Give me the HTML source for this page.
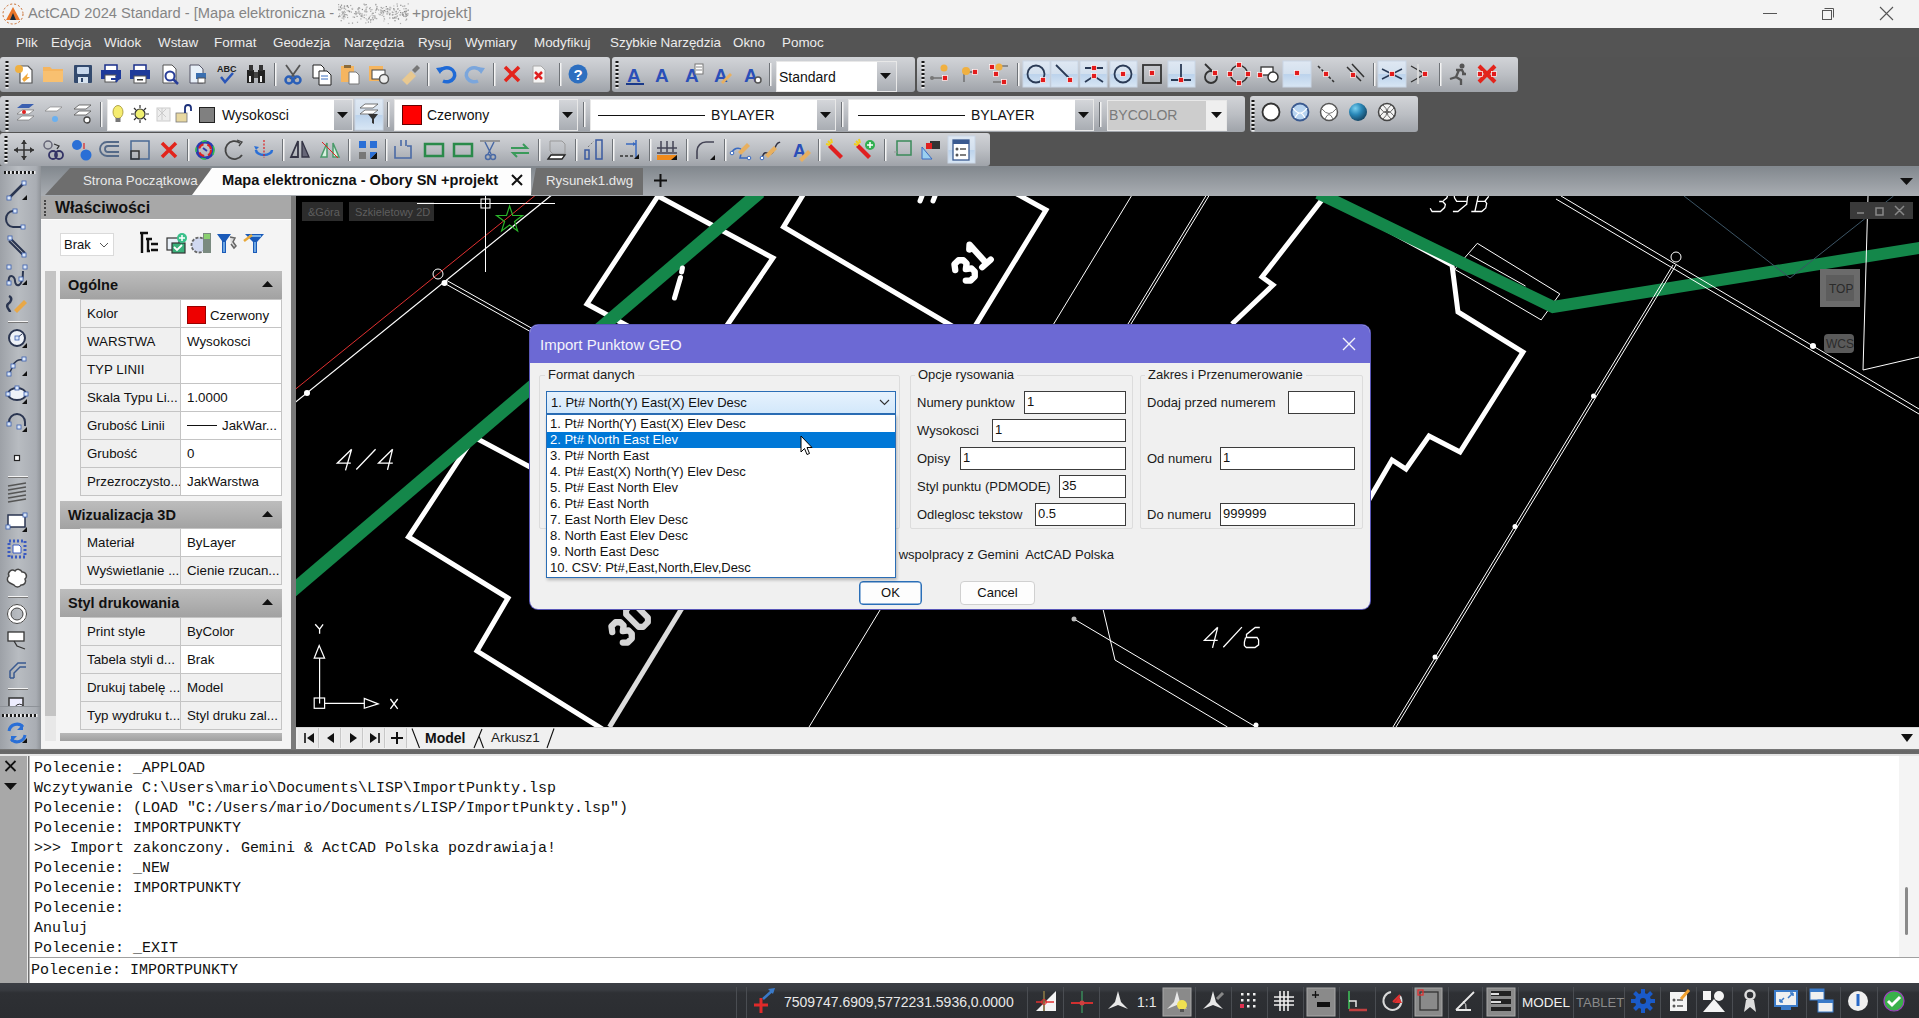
<!DOCTYPE html>
<html><head><meta charset="utf-8">
<style>
*{box-sizing:border-box;margin:0;padding:0}
html,body{width:1919px;height:1018px;overflow:hidden;background:#535353;font-family:"Liberation Sans",sans-serif;position:relative}
.a{position:absolute}
#title{left:0;top:0;width:1919px;height:28px;background:#f3f3f3}
#title .t{left:28px;top:5px;font-size:14.7px;color:#858585;white-space:nowrap}
#menu{left:0;top:28px;width:1919px;height:29px;background:#545454}
#menu span{position:absolute;top:6.5px;font-size:13.4px;color:#ececec;white-space:nowrap}
.tb{background:linear-gradient(#d2d4d8,#bcbfc4 50%,#9fa3a9);border-radius:3px}
#tabbar{left:40px;top:166px;width:1879px;height:30px;background:linear-gradient(#83898f 5%,#a9adb2)}
#lefttb{left:0;top:166px;width:41px;height:585px;background:linear-gradient(90deg,#9da1a7,#b8bcc1 45%,#a9adb3 88%,#8f9398)}
#props{left:41px;top:196px;width:251px;height:555px;background:#f0f0f0}
#draw{left:296px;top:196px;width:1623px;height:531px;background:#000;overflow:hidden}
#layout{left:296px;top:727px;width:1623px;height:23px;background:#f0f0f0}
#cmd{left:0;top:756px;width:1919px;height:227px;background:#a9a9a9}
#status{left:0;top:983px;width:1919px;height:35px;background:#2b2d31}
.lb{position:absolute;font-size:13px;color:#1a1a1a;white-space:nowrap}
.in{position:absolute;height:23px;border:1px solid #3c3c3c;background:#fff;font-size:13px;padding:1px 0 0 2px;color:#111;line-height:17px}
.btn{background:#fdfdfd;border:1px solid #d0d0d0;border-radius:4px;font-size:13px;color:#111;text-align:center;line-height:22px}
.li{position:absolute;left:0;width:348px;height:16px;font-size:13px;line-height:16px;padding-left:3px;color:#111;white-space:nowrap}
#props{overflow:hidden}
.ph{position:absolute;left:19px;width:222px;height:28px;background:linear-gradient(#bdbdbd,#a2a2a2);font-size:14.5px;font-weight:bold;color:#111;padding:6px 0 0 8px;white-space:nowrap}
.pr{position:absolute;left:39px;width:202px;height:28px;font-size:13.3px;color:#111;white-space:nowrap}
.pn{position:absolute;left:0;top:0;width:101px;height:29px;background:#f0f0f0;border:1px solid #c4c4c4;padding:6px 0 0 6px;overflow:hidden}
.pv{position:absolute;left:100px;top:0;width:102px;height:29px;border:1px solid #c4c4c4;padding:6px 0 0 6px;overflow:hidden}
.nb{position:absolute;top:1px;width:21px;height:20px;background:#ebebeb;border-right:1px solid #c8c8c8}
.cl{position:absolute;left:34px;font-family:"Liberation Mono",monospace;font-size:15px;color:#111;white-space:pre;line-height:20px}
.cb{position:absolute;background:#fff;border:1px solid #e8e8e8}
.cbb{position:absolute;background:linear-gradient(#d4d6da,#a9adb3);}
.cbt{position:absolute;font-size:14px;color:#111;white-space:nowrap}
</style></head><body>
<div id="title" class="a"><svg class="a" style="left:1px;top:2px" width="24" height="24"><circle cx="12" cy="12" r="10" fill="none" stroke="#c86a2a" stroke-width="1" stroke-dasharray="2,2"/><path d="M5,18 L12,5 L19,18 Z" fill="#e8752a"/><path d="M9,18 L12,11 L15,18 Z" fill="#1a2a3a"/></svg><div class="a t">ActCAD 2024 Standard - [Mapa elektroniczna -</div><svg class="a" style="left:338px;top:2px" width="72" height="24"><rect x="22.7" y="13.8" width="1.2" height="1.2" fill="#9a9a9a"/><rect x="57.5" y="15.3" width="1.2" height="1.2" fill="#9a9a9a"/><rect x="25.6" y="15.0" width="1.2" height="1.2" fill="#9a9a9a"/><rect x="6.0" y="11.9" width="1.2" height="1.2" fill="#888"/><rect x="4.9" y="14.0" width="1.2" height="1.2" fill="#a8a8a8"/><rect x="8.7" y="12.6" width="1.2" height="1.2" fill="#b0b0b0"/><rect x="44.1" y="8.6" width="1.2" height="1.2" fill="#a8a8a8"/><rect x="27.8" y="9.2" width="1.2" height="1.2" fill="#b0b0b0"/><rect x="3.3" y="12.3" width="1.2" height="1.2" fill="#b0b0b0"/><rect x="37.8" y="7.1" width="1.2" height="1.2" fill="#a8a8a8"/><rect x="21.6" y="11.1" width="1.2" height="1.2" fill="#a8a8a8"/><rect x="40.0" y="7.4" width="1.2" height="1.2" fill="#b0b0b0"/><rect x="26.1" y="8.5" width="1.2" height="1.2" fill="#9a9a9a"/><rect x="43.3" y="9.5" width="1.2" height="1.2" fill="#888"/><rect x="47.6" y="6.5" width="1.2" height="1.2" fill="#a8a8a8"/><rect x="64.6" y="11.7" width="1.2" height="1.2" fill="#c4c4c4"/><rect x="21.0" y="11.9" width="1.2" height="1.2" fill="#b0b0b0"/><rect x="5.7" y="3.3" width="1.2" height="1.2" fill="#c4c4c4"/><rect x="36.8" y="15.1" width="1.2" height="1.2" fill="#c4c4c4"/><rect x="42.6" y="4.9" width="1.2" height="1.2" fill="#9a9a9a"/><rect x="8.3" y="3.4" width="1.2" height="1.2" fill="#b0b0b0"/><rect x="65.3" y="13.7" width="1.2" height="1.2" fill="#888"/><rect x="2.7" y="6.2" width="1.2" height="1.2" fill="#a8a8a8"/><rect x="55.2" y="3.3" width="1.2" height="1.2" fill="#c4c4c4"/><rect x="23.8" y="6.9" width="1.2" height="1.2" fill="#888"/><rect x="4.8" y="14.3" width="1.2" height="1.2" fill="#9a9a9a"/><rect x="66.1" y="3.4" width="1.2" height="1.2" fill="#9a9a9a"/><rect x="51.2" y="11.1" width="1.2" height="1.2" fill="#c4c4c4"/><rect x="45.3" y="18.4" width="1.2" height="1.2" fill="#c4c4c4"/><rect x="50.2" y="9.6" width="1.2" height="1.2" fill="#c4c4c4"/><rect x="1.6" y="7.3" width="1.2" height="1.2" fill="#9a9a9a"/><rect x="34.6" y="10.7" width="1.2" height="1.2" fill="#b0b0b0"/><rect x="53.8" y="12.3" width="1.2" height="1.2" fill="#888"/><rect x="64.2" y="12.5" width="1.2" height="1.2" fill="#888"/><rect x="5.6" y="4.6" width="1.2" height="1.2" fill="#b0b0b0"/><rect x="57.3" y="11.8" width="1.2" height="1.2" fill="#a8a8a8"/><rect x="19.5" y="6.3" width="1.2" height="1.2" fill="#888"/><rect x="67.0" y="12.2" width="1.2" height="1.2" fill="#b0b0b0"/><rect x="5.8" y="13.8" width="1.2" height="1.2" fill="#9a9a9a"/><rect x="33.9" y="15.4" width="1.2" height="1.2" fill="#a8a8a8"/><rect x="12.8" y="9.5" width="1.2" height="1.2" fill="#a8a8a8"/><rect x="25.8" y="12.5" width="1.2" height="1.2" fill="#a8a8a8"/><rect x="22.3" y="16.3" width="1.2" height="1.2" fill="#a8a8a8"/><rect x="45.8" y="16.3" width="1.2" height="1.2" fill="#9a9a9a"/><rect x="32.0" y="17.6" width="1.2" height="1.2" fill="#a8a8a8"/><rect x="27.5" y="2.0" width="1.2" height="1.2" fill="#888"/><rect x="27.6" y="5.5" width="1.2" height="1.2" fill="#b0b0b0"/><rect x="4.7" y="10.5" width="1.2" height="1.2" fill="#b0b0b0"/><rect x="30.8" y="14.7" width="1.2" height="1.2" fill="#9a9a9a"/><rect x="0.0" y="13.9" width="1.2" height="1.2" fill="#b0b0b0"/><rect x="37.6" y="15.9" width="1.2" height="1.2" fill="#9a9a9a"/><rect x="61.2" y="8.0" width="1.2" height="1.2" fill="#a8a8a8"/><rect x="26.3" y="2.5" width="1.2" height="1.2" fill="#a8a8a8"/><rect x="25.5" y="1.6" width="1.2" height="1.2" fill="#9a9a9a"/><rect x="33.6" y="10.9" width="1.2" height="1.2" fill="#c4c4c4"/><rect x="6.0" y="13.3" width="1.2" height="1.2" fill="#c4c4c4"/><rect x="33.5" y="12.5" width="1.2" height="1.2" fill="#b0b0b0"/><rect x="36.1" y="13.1" width="1.2" height="1.2" fill="#c4c4c4"/><rect x="10.3" y="20.7" width="1.2" height="1.2" fill="#a8a8a8"/><rect x="64.0" y="10.2" width="1.2" height="1.2" fill="#9a9a9a"/><rect x="48.7" y="6.2" width="1.2" height="1.2" fill="#c4c4c4"/><rect x="36.3" y="13.5" width="1.2" height="1.2" fill="#b0b0b0"/><rect x="37.3" y="7.7" width="1.2" height="1.2" fill="#a8a8a8"/><rect x="23.1" y="11.4" width="1.2" height="1.2" fill="#b0b0b0"/><rect x="56.4" y="18.1" width="1.2" height="1.2" fill="#888"/><rect x="51.8" y="10.8" width="1.2" height="1.2" fill="#c4c4c4"/><rect x="51.2" y="15.4" width="1.2" height="1.2" fill="#9a9a9a"/><rect x="55.3" y="7.1" width="1.2" height="1.2" fill="#a8a8a8"/><rect x="67.0" y="10.5" width="1.2" height="1.2" fill="#888"/><rect x="56.6" y="9.3" width="1.2" height="1.2" fill="#c4c4c4"/><rect x="5.6" y="5.9" width="1.2" height="1.2" fill="#9a9a9a"/><rect x="15.9" y="11.0" width="1.2" height="1.2" fill="#a8a8a8"/><rect x="69.0" y="12.9" width="1.2" height="1.2" fill="#a8a8a8"/><rect x="58.8" y="3.5" width="1.2" height="1.2" fill="#9a9a9a"/><rect x="58.4" y="10.8" width="1.2" height="1.2" fill="#9a9a9a"/><rect x="63.7" y="11.5" width="1.2" height="1.2" fill="#888"/><rect x="62.2" y="2.7" width="1.2" height="1.2" fill="#888"/><rect x="55.2" y="6.0" width="1.2" height="1.2" fill="#888"/><rect x="32.4" y="17.0" width="1.2" height="1.2" fill="#9a9a9a"/><rect x="50.7" y="11.1" width="1.2" height="1.2" fill="#b0b0b0"/><rect x="41.4" y="12.1" width="1.2" height="1.2" fill="#888"/><rect x="56.5" y="15.1" width="1.2" height="1.2" fill="#888"/><rect x="46.0" y="16.7" width="1.2" height="1.2" fill="#c4c4c4"/><rect x="10.9" y="9.1" width="1.2" height="1.2" fill="#9a9a9a"/><rect x="36.9" y="9.7" width="1.2" height="1.2" fill="#b0b0b0"/><rect x="30.4" y="15.8" width="1.2" height="1.2" fill="#b0b0b0"/><rect x="2.0" y="3.9" width="1.2" height="1.2" fill="#b0b0b0"/><rect x="20.5" y="10.4" width="1.2" height="1.2" fill="#c4c4c4"/><rect x="38.1" y="16.0" width="1.2" height="1.2" fill="#b0b0b0"/><rect x="4.3" y="9.4" width="1.2" height="1.2" fill="#a8a8a8"/><rect x="36.2" y="14.3" width="1.2" height="1.2" fill="#b0b0b0"/><rect x="37.2" y="1.8" width="1.2" height="1.2" fill="#a8a8a8"/><rect x="35.7" y="15.4" width="1.2" height="1.2" fill="#a8a8a8"/><rect x="0.3" y="4.4" width="1.2" height="1.2" fill="#b0b0b0"/><rect x="12.1" y="2.9" width="1.2" height="1.2" fill="#a8a8a8"/><rect x="4.3" y="11.2" width="1.2" height="1.2" fill="#a8a8a8"/><rect x="37.2" y="2.3" width="1.2" height="1.2" fill="#a8a8a8"/><rect x="4.0" y="10.9" width="1.2" height="1.2" fill="#b0b0b0"/><rect x="19.4" y="10.7" width="1.2" height="1.2" fill="#a8a8a8"/><rect x="2.0" y="4.7" width="1.2" height="1.2" fill="#9a9a9a"/><rect x="31.0" y="5.9" width="1.2" height="1.2" fill="#a8a8a8"/><rect x="14.0" y="6.5" width="1.2" height="1.2" fill="#c4c4c4"/><rect x="31.7" y="5.0" width="1.2" height="1.2" fill="#b0b0b0"/><rect x="48.9" y="8.9" width="1.2" height="1.2" fill="#c4c4c4"/><rect x="64.6" y="12.4" width="1.2" height="1.2" fill="#888"/><rect x="9.6" y="8.1" width="1.2" height="1.2" fill="#9a9a9a"/><rect x="27.5" y="7.3" width="1.2" height="1.2" fill="#888"/><rect x="5.1" y="16.1" width="1.2" height="1.2" fill="#c4c4c4"/><rect x="54.9" y="12.1" width="1.2" height="1.2" fill="#c4c4c4"/><rect x="10.0" y="8.4" width="1.2" height="1.2" fill="#b0b0b0"/><rect x="67.7" y="12.1" width="1.2" height="1.2" fill="#888"/><rect x="61.9" y="20.9" width="1.2" height="1.2" fill="#b0b0b0"/><rect x="69.3" y="11.3" width="1.2" height="1.2" fill="#888"/><rect x="69.6" y="7.7" width="1.2" height="1.2" fill="#888"/><rect x="23.7" y="11.3" width="1.2" height="1.2" fill="#c4c4c4"/><rect x="1.4" y="13.7" width="1.2" height="1.2" fill="#a8a8a8"/><rect x="32.1" y="8.7" width="1.2" height="1.2" fill="#a8a8a8"/><rect x="43.7" y="5.8" width="1.2" height="1.2" fill="#a8a8a8"/><rect x="67.3" y="17.6" width="1.2" height="1.2" fill="#b0b0b0"/><rect x="68.0" y="16.6" width="1.2" height="1.2" fill="#9a9a9a"/><rect x="5.9" y="8.7" width="1.2" height="1.2" fill="#b0b0b0"/><rect x="18.9" y="19.7" width="1.2" height="1.2" fill="#b0b0b0"/><rect x="57.4" y="14.0" width="1.2" height="1.2" fill="#c4c4c4"/><rect x="28.4" y="4.5" width="1.2" height="1.2" fill="#a8a8a8"/><rect x="64.3" y="3.7" width="1.2" height="1.2" fill="#9a9a9a"/><rect x="19.5" y="7.0" width="1.2" height="1.2" fill="#b0b0b0"/><rect x="29.8" y="19.5" width="1.2" height="1.2" fill="#9a9a9a"/><rect x="56.1" y="14.7" width="1.2" height="1.2" fill="#9a9a9a"/><rect x="42.6" y="10.6" width="1.2" height="1.2" fill="#9a9a9a"/><rect x="31.8" y="13.5" width="1.2" height="1.2" fill="#c4c4c4"/><rect x="69.6" y="1.3" width="1.2" height="1.2" fill="#a8a8a8"/><rect x="9.0" y="14.9" width="1.2" height="1.2" fill="#a8a8a8"/><rect x="49.7" y="21.0" width="1.2" height="1.2" fill="#c4c4c4"/><rect x="3.5" y="5.5" width="1.2" height="1.2" fill="#b0b0b0"/><rect x="65.3" y="6.2" width="1.2" height="1.2" fill="#b0b0b0"/><rect x="20.3" y="6.0" width="1.2" height="1.2" fill="#a8a8a8"/><rect x="47.1" y="9.0" width="1.2" height="1.2" fill="#c4c4c4"/><rect x="2.6" y="18.1" width="1.2" height="1.2" fill="#9a9a9a"/><rect x="51.3" y="7.2" width="1.2" height="1.2" fill="#888"/><rect x="17.2" y="9.1" width="1.2" height="1.2" fill="#888"/><rect x="7.4" y="12.0" width="1.2" height="1.2" fill="#888"/><rect x="38.2" y="5.7" width="1.2" height="1.2" fill="#888"/><rect x="67.9" y="8.9" width="1.2" height="1.2" fill="#b0b0b0"/><rect x="24.0" y="12.9" width="1.2" height="1.2" fill="#b0b0b0"/><rect x="28.3" y="9.1" width="1.2" height="1.2" fill="#b0b0b0"/><rect x="1.0" y="11.2" width="1.2" height="1.2" fill="#c4c4c4"/><rect x="30.2" y="16.3" width="1.2" height="1.2" fill="#888"/><rect x="60.9" y="12.3" width="1.2" height="1.2" fill="#c4c4c4"/><rect x="41.9" y="9.5" width="1.2" height="1.2" fill="#b0b0b0"/><rect x="11.0" y="8.7" width="1.2" height="1.2" fill="#888"/><rect x="0.3" y="7.4" width="1.2" height="1.2" fill="#a8a8a8"/><rect x="22.6" y="13.0" width="1.2" height="1.2" fill="#9a9a9a"/><rect x="67.6" y="8.5" width="1.2" height="1.2" fill="#9a9a9a"/><rect x="23.5" y="13.9" width="1.2" height="1.2" fill="#9a9a9a"/><rect x="33.2" y="7.0" width="1.2" height="1.2" fill="#a8a8a8"/><rect x="54.3" y="9.9" width="1.2" height="1.2" fill="#9a9a9a"/><rect x="18.5" y="13.8" width="1.2" height="1.2" fill="#9a9a9a"/><rect x="27.6" y="12.4" width="1.2" height="1.2" fill="#c4c4c4"/><rect x="21.3" y="10.6" width="1.2" height="1.2" fill="#a8a8a8"/><rect x="59.7" y="15.9" width="1.2" height="1.2" fill="#b0b0b0"/><rect x="46.0" y="8.0" width="1.2" height="1.2" fill="#888"/><rect x="50.4" y="6.3" width="1.2" height="1.2" fill="#a8a8a8"/><rect x="45.0" y="10.1" width="1.2" height="1.2" fill="#9a9a9a"/><rect x="57.7" y="8.8" width="1.2" height="1.2" fill="#888"/><rect x="51.4" y="4.7" width="1.2" height="1.2" fill="#a8a8a8"/><rect x="9.8" y="4.7" width="1.2" height="1.2" fill="#9a9a9a"/><rect x="57.8" y="9.2" width="1.2" height="1.2" fill="#a8a8a8"/><rect x="55.9" y="7.3" width="1.2" height="1.2" fill="#b0b0b0"/><rect x="2.9" y="2.6" width="1.2" height="1.2" fill="#888"/><rect x="58.5" y="1.4" width="1.2" height="1.2" fill="#a8a8a8"/><rect x="3.6" y="15.5" width="1.2" height="1.2" fill="#b0b0b0"/><rect x="34.3" y="10.7" width="1.2" height="1.2" fill="#9a9a9a"/><rect x="32.0" y="19.5" width="1.2" height="1.2" fill="#a8a8a8"/><rect x="6.4" y="14.5" width="1.2" height="1.2" fill="#a8a8a8"/><rect x="4.6" y="9.7" width="1.2" height="1.2" fill="#9a9a9a"/><rect x="59.2" y="6.6" width="1.2" height="1.2" fill="#b0b0b0"/><rect x="51.1" y="12.1" width="1.2" height="1.2" fill="#888"/><rect x="34.6" y="17.1" width="1.2" height="1.2" fill="#888"/><rect x="5.4" y="13.1" width="1.2" height="1.2" fill="#9a9a9a"/><rect x="43.2" y="8.0" width="1.2" height="1.2" fill="#b0b0b0"/><rect x="5.4" y="12.1" width="1.2" height="1.2" fill="#c4c4c4"/><rect x="43.5" y="12.8" width="1.2" height="1.2" fill="#b0b0b0"/><rect x="0.9" y="13.3" width="1.2" height="1.2" fill="#9a9a9a"/><rect x="48.5" y="11.3" width="1.2" height="1.2" fill="#888"/><rect x="20.4" y="5.0" width="1.2" height="1.2" fill="#888"/><rect x="53.7" y="9.5" width="1.2" height="1.2" fill="#a8a8a8"/><rect x="13.9" y="20.5" width="1.2" height="1.2" fill="#9a9a9a"/><rect x="20.3" y="8.6" width="1.2" height="1.2" fill="#9a9a9a"/><rect x="57.4" y="14.8" width="1.2" height="1.2" fill="#c4c4c4"/><rect x="27.1" y="9.0" width="1.2" height="1.2" fill="#b0b0b0"/><rect x="5.2" y="16.3" width="1.2" height="1.2" fill="#c4c4c4"/><rect x="66.7" y="14.0" width="1.2" height="1.2" fill="#b0b0b0"/><rect x="42.2" y="7.5" width="1.2" height="1.2" fill="#9a9a9a"/><rect x="49.2" y="7.3" width="1.2" height="1.2" fill="#b0b0b0"/><rect x="34.9" y="13.2" width="1.2" height="1.2" fill="#b0b0b0"/><rect x="0.3" y="6.8" width="1.2" height="1.2" fill="#888"/><rect x="47.7" y="4.0" width="1.2" height="1.2" fill="#888"/><rect x="24.1" y="14.1" width="1.2" height="1.2" fill="#c4c4c4"/><rect x="8.5" y="8.1" width="1.2" height="1.2" fill="#c4c4c4"/><rect x="58.7" y="13.5" width="1.2" height="1.2" fill="#9a9a9a"/><rect x="65.8" y="10.2" width="1.2" height="1.2" fill="#c4c4c4"/><rect x="17.7" y="10.7" width="1.2" height="1.2" fill="#9a9a9a"/><rect x="27.5" y="16.0" width="1.2" height="1.2" fill="#c4c4c4"/><rect x="64.8" y="10.0" width="1.2" height="1.2" fill="#c4c4c4"/><rect x="59.8" y="9.7" width="1.2" height="1.2" fill="#c4c4c4"/><rect x="44.4" y="11.4" width="1.2" height="1.2" fill="#b0b0b0"/><rect x="17.5" y="9.5" width="1.2" height="1.2" fill="#b0b0b0"/><rect x="54.1" y="15.4" width="1.2" height="1.2" fill="#888"/><rect x="61.9" y="12.4" width="1.2" height="1.2" fill="#a8a8a8"/><rect x="38.4" y="4.1" width="1.2" height="1.2" fill="#9a9a9a"/><rect x="3.5" y="9.5" width="1.2" height="1.2" fill="#b0b0b0"/><rect x="45.1" y="5.1" width="1.2" height="1.2" fill="#c4c4c4"/><rect x="34.0" y="14.8" width="1.2" height="1.2" fill="#b0b0b0"/><rect x="33.1" y="7.0" width="1.2" height="1.2" fill="#c4c4c4"/><rect x="19.7" y="9.7" width="1.2" height="1.2" fill="#c4c4c4"/><rect x="28.4" y="17.4" width="1.2" height="1.2" fill="#b0b0b0"/><rect x="21.1" y="5.8" width="1.2" height="1.2" fill="#b0b0b0"/><rect x="45.0" y="8.4" width="1.2" height="1.2" fill="#9a9a9a"/><rect x="14.6" y="14.4" width="1.2" height="1.2" fill="#b0b0b0"/><rect x="31.7" y="7.1" width="1.2" height="1.2" fill="#c4c4c4"/><rect x="69.8" y="7.7" width="1.2" height="1.2" fill="#b0b0b0"/><rect x="17.1" y="10.8" width="1.2" height="1.2" fill="#b0b0b0"/><rect x="23.9" y="12.8" width="1.2" height="1.2" fill="#c4c4c4"/><rect x="56.7" y="11.8" width="1.2" height="1.2" fill="#b0b0b0"/><rect x="62.1" y="10.0" width="1.2" height="1.2" fill="#888"/><rect x="52.2" y="5.4" width="1.2" height="1.2" fill="#b0b0b0"/><rect x="26.4" y="9.2" width="1.2" height="1.2" fill="#c4c4c4"/><rect x="40.2" y="11.4" width="1.2" height="1.2" fill="#c4c4c4"/><rect x="8.8" y="3.7" width="1.2" height="1.2" fill="#b0b0b0"/><rect x="6.5" y="9.9" width="1.2" height="1.2" fill="#b0b0b0"/><rect x="26.9" y="7.1" width="1.2" height="1.2" fill="#c4c4c4"/><rect x="59.4" y="6.2" width="1.2" height="1.2" fill="#9a9a9a"/><rect x="8.9" y="3.2" width="1.2" height="1.2" fill="#888"/><rect x="67.8" y="13.5" width="1.2" height="1.2" fill="#888"/><rect x="0.0" y="2.0" width="1.2" height="1.2" fill="#a8a8a8"/><rect x="59.9" y="16.5" width="1.2" height="1.2" fill="#888"/><rect x="17.4" y="12.0" width="1.2" height="1.2" fill="#a8a8a8"/><rect x="68.0" y="11.6" width="1.2" height="1.2" fill="#9a9a9a"/><rect x="65.9" y="8.9" width="1.2" height="1.2" fill="#888"/><rect x="6.0" y="3.6" width="1.2" height="1.2" fill="#9a9a9a"/><rect x="0.1" y="14.1" width="1.2" height="1.2" fill="#9a9a9a"/><rect x="45.2" y="14.1" width="1.2" height="1.2" fill="#c4c4c4"/><rect x="67.4" y="6.1" width="1.2" height="1.2" fill="#888"/><rect x="48.9" y="6.1" width="1.2" height="1.2" fill="#9a9a9a"/><rect x="7.0" y="6.6" width="1.2" height="1.2" fill="#b0b0b0"/><rect x="27.2" y="20.3" width="1.2" height="1.2" fill="#b0b0b0"/><rect x="55.3" y="15.6" width="1.2" height="1.2" fill="#888"/><rect x="19.5" y="10.0" width="1.2" height="1.2" fill="#c4c4c4"/><rect x="45.1" y="13.8" width="1.2" height="1.2" fill="#b0b0b0"/><rect x="38.3" y="6.6" width="1.2" height="1.2" fill="#9a9a9a"/><rect x="67.2" y="8.9" width="1.2" height="1.2" fill="#9a9a9a"/><rect x="13.6" y="6.3" width="1.2" height="1.2" fill="#888"/><rect x="5.7" y="10.7" width="1.2" height="1.2" fill="#c4c4c4"/><rect x="15.9" y="14.7" width="1.2" height="1.2" fill="#9a9a9a"/><rect x="48.7" y="9.2" width="1.2" height="1.2" fill="#888"/><rect x="13.9" y="5.8" width="1.2" height="1.2" fill="#c4c4c4"/></svg><div class="a t" style="left:412px;font-size:15.5px;top:4px">+projekt]</div>
<svg class="a" style="left:1760px;top:5px" width="140" height="18"><path d="M3,8.5 H17" stroke="#555" stroke-width="1"/><rect x="62.5" y="5.5" width="9" height="9" fill="none" stroke="#555"/><path d="M64.5,3.5 h9 v9" fill="none" stroke="#555"/><path d="M120,2 L133,15 M133,2 L120,15" stroke="#555" stroke-width="1.1"/></svg></div>

<div id="menu" class="a">
<span style="left:16px">Plik</span><span style="left:51px">Edycja</span><span style="left:104px">Widok</span><span style="left:158px">Wstaw</span><span style="left:214px">Format</span><span style="left:273px">Geodezja</span><span style="left:344px">Narzędzia</span><span style="left:418px">Rysuj</span><span style="left:465px">Wymiary</span><span style="left:534px">Modyfikuj</span><span style="left:610px">Szybkie Narzędzia</span><span style="left:733px">Okno</span><span style="left:782px">Pomoc</span>
</div>
<div class="a tb" style="left:0;top:57px;width:610px;height:35px"></div>
<div class="a tb" style="left:612px;top:57px;width:303px;height:35px"></div>
<div class="a tb" style="left:917px;top:57px;width:601px;height:35px"></div>
<div class="a tb" style="left:0;top:96px;width:1245px;height:36px"></div>
<div class="a tb" style="left:1250px;top:96px;width:168px;height:36px"></div>
<div class="a tb" style="left:0;top:133px;width:990px;height:33px"></div>
<div class="cb" style="left:776px;top:61px;width:121px;height:31px"></div>
<div class="cbb" style="left:877px;top:62px;width:19px;height:29px"></div>
<div class="cbt" style="left:779px;top:69px;font-size:14px">Standard</div>
<div class="cb" style="left:107px;top:99px;width:246px;height:32px"></div>
<div class="cbb" style="left:334px;top:100px;width:18px;height:30px"></div>
<div class="a" style="left:199px;top:107px;width:16px;height:16px;background:#808080;border:1px solid #222"></div>
<div class="cbt" style="left:222px;top:107px">Wysokosci</div>
<div class="cb" style="left:394px;top:99px;width:184px;height:32px"></div>
<div class="cbb" style="left:559px;top:100px;width:18px;height:30px"></div>
<div class="a" style="left:402px;top:105px;width:20px;height:20px;background:#f00;border:1px solid #600"></div>
<div class="cbt" style="left:427px;top:107px">Czerwony</div>
<div class="cb" style="left:590px;top:99px;width:246px;height:32px"></div>
<div class="cbb" style="left:817px;top:100px;width:18px;height:30px"></div>
<div class="a" style="left:598px;top:115px;width:107px;height:1px;background:#111"></div>
<div class="cbt" style="left:711px;top:107px">BYLAYER</div>
<div class="cb" style="left:848px;top:99px;width:246px;height:32px"></div>
<div class="cbb" style="left:1075px;top:100px;width:18px;height:30px"></div>
<div class="a" style="left:858px;top:115px;width:107px;height:1px;background:#111"></div>
<div class="cbt" style="left:971px;top:107px">BYLAYER</div>
<div class="cb" style="left:1107px;top:100px;width:120px;height:31px;background:#efefef"></div>
<div class="a" style="left:1108px;top:101px;width:98px;height:29px;background:#cdcdcd"></div>
<div class="cbt" style="left:1109px;top:107px;color:#7a7a7a">BYCOLOR</div>
<svg class="a" style="left:880px;top:73px" width="12" height="7"><path d="M0,0 H11 L5.5,6 Z" fill="#111"/></svg>
<svg class="a" style="left:337px;top:112px" width="12" height="7"><path d="M0,0 H11 L5.5,6 Z" fill="#111"/></svg>
<svg class="a" style="left:562px;top:112px" width="12" height="7"><path d="M0,0 H11 L5.5,6 Z" fill="#111"/></svg>
<svg class="a" style="left:820px;top:112px" width="12" height="7"><path d="M0,0 H11 L5.5,6 Z" fill="#111"/></svg>
<svg class="a" style="left:1078px;top:112px" width="12" height="7"><path d="M0,0 H11 L5.5,6 Z" fill="#111"/></svg>
<svg class="a" style="left:1211px;top:112px" width="12" height="7"><path d="M0,0 H11 L5.5,6 Z" fill="#111"/></svg>
<svg class="a" style="left:0;top:0" width="1919" height="196"><defs><linearGradient id="hlg" x1="0" y1="0" x2="0" y2="1"><stop offset="0" stop-color="#dfe8f3"/><stop offset="0.5" stop-color="#d3e0ee"/><stop offset="0.52" stop-color="#bcd3ec"/><stop offset="1" stop-color="#d8e6f4"/></linearGradient><radialGradient id="sphg" cx="0.35" cy="0.3" r="0.7"><stop offset="0" stop-color="#7ad0f0"/><stop offset="0.5" stop-color="#2a88b8"/><stop offset="1" stop-color="#164a6a"/></radialGradient></defs><rect x="5.5" y="61" width="3" height="2" fill="#1a1a1a"/><rect x="5.5" y="63" width="3" height="1.5" fill="#f0f0f0"/><rect x="5.5" y="65" width="3" height="2" fill="#1a1a1a"/><rect x="5.5" y="67" width="3" height="1.5" fill="#f0f0f0"/><rect x="5.5" y="69" width="3" height="2" fill="#1a1a1a"/><rect x="5.5" y="71" width="3" height="1.5" fill="#f0f0f0"/><rect x="5.5" y="73" width="3" height="2" fill="#1a1a1a"/><rect x="5.5" y="75" width="3" height="1.5" fill="#f0f0f0"/><rect x="5.5" y="77" width="3" height="2" fill="#1a1a1a"/><rect x="5.5" y="79" width="3" height="1.5" fill="#f0f0f0"/><rect x="5.5" y="81" width="3" height="2" fill="#1a1a1a"/><rect x="5.5" y="83" width="3" height="1.5" fill="#f0f0f0"/><rect x="5.5" y="85" width="3" height="2" fill="#1a1a1a"/><rect x="5.5" y="87" width="3" height="1.5" fill="#f0f0f0"/><g transform="translate(25,74)"><path d="M-5,-8 h8 l4,4 v13 h-12 z" fill="#fff" stroke="#555" stroke-width="1.2"/><circle cx="-6" cy="-5" r="4" fill="#f0b040"/><path d="M-3,5 l6,-6 l-1,4 l3,0 l-6,5 z" fill="#f2a93b"/></g><g transform="translate(53,74)"><path d="M-10,-7 h7 l2,2 h11 v13 h-20 z" fill="#f5b55f"/><rect x="-10" y="-3" width="20" height="11" fill="#f8c070"/></g><g transform="translate(83,74)"><rect x="-9" y="-9" width="18" height="18" rx="1" fill="#334a6e"/><rect x="-6" y="-7" width="12" height="7" rx="1" fill="#c8d8ec"/><rect x="-5" y="3" width="10" height="6" fill="#d8e4f0"/><rect x="-2" y="4" width="2" height="4" fill="#334a6e"/></g><g transform="translate(111,74)"><rect x="-6" y="-9" width="12" height="6" fill="#fff" stroke="#1a2f8a" stroke-width="1.5"/><rect x="-10" y="-4" width="20" height="9" fill="#1e3a9a"/><rect x="-6" y="1" width="11" height="7" fill="#fff" stroke="#555"/><path d="M0,5 h7 l-2,-3 M7,5 l-2,3" stroke="#1e3a9a" stroke-width="2" fill="none"/></g><g transform="translate(140,74)"><rect x="-6" y="-9" width="12" height="6" fill="#fff" stroke="#1a2f8a" stroke-width="1.5"/><rect x="-10" y="-4" width="20" height="9" fill="#1e3a9a"/><rect x="-6" y="2" width="12" height="7" fill="#fff" stroke="#555"/><rect x="-3" y="5" width="6" height="1.5" fill="#333"/></g><g transform="translate(170,74)"><path d="M-7,-9 h9 l4,4 v14 h-13 z" fill="#fff" stroke="#555"/><circle cx="0" cy="2" r="4.5" fill="none" stroke="#2a3f99" stroke-width="2"/><path d="M3,5 l5,5" stroke="#2a3f99" stroke-width="2.5"/></g><g transform="translate(198,74)"><path d="M-8,-9 h9 l4,4 v14 h-13 z" fill="#e8f0f8" stroke="#556"/><rect x="-2" y="-1" width="10" height="6" fill="#3a6fb0"/><rect x="0" y="4" width="7" height="5" fill="#fff" stroke="#555"/></g><g transform="translate(227,74)"><text x="-10" y="-2" font-family="Liberation Sans" font-size="9" font-weight="bold" fill="#222">ABC</text><path d="M-6,3 l4,5 l8,-9" stroke="#2a56b8" stroke-width="2.5" fill="none"/></g><g transform="translate(256,74)"><rect x="-9" y="-4" width="7" height="13" fill="#222"/><rect x="2" y="-4" width="7" height="13" fill="#222"/><rect x="-7" y="-9" width="4" height="6" fill="#333"/><rect x="3" y="-9" width="4" height="6" fill="#333"/><rect x="-2" y="-2" width="4" height="6" fill="#444"/><rect x="-7" y="2" width="2" height="6" fill="#eee"/><rect x="4" y="2" width="2" height="6" fill="#eee"/></g><g transform="translate(293,74)"><path d="M-7,-9 L3,5 M7,-9 L-3,5" stroke="#555" stroke-width="1.8"/><circle cx="-4" cy="6" r="3.5" fill="none" stroke="#2a5fb8" stroke-width="2.5"/><circle cx="4" cy="6" r="3.5" fill="none" stroke="#2a5fb8" stroke-width="2.5"/></g><g transform="translate(322,74)"><path d="M-9,-9 h8 l3,3 v10 h-11 z" fill="#fff" stroke="#222"/><path d="M-3,-3 h8 l4,4 v10 h-12 z" fill="#fff" stroke="#222"/><path d="M-1,2 h7 M-1,5 h7" stroke="#3a6fc0"/></g><g transform="translate(350,74)"><rect x="-9" y="-8" width="13" height="16" fill="#f5b55f"/><rect x="-6" y="-9" width="7" height="3" fill="#8a6a3a"/><path d="M-1,-2 h7 l3,3 v9 h-10 z" fill="#fff" stroke="#777"/></g><g transform="translate(379,74)"><rect x="-10" y="-8" width="14" height="15" fill="#f5b55f"/><rect x="-7" y="-4" width="13" height="9" fill="#fff" stroke="#444"/><circle cx="5" cy="5" r="4.5" fill="#eee" stroke="#555" stroke-width="1.5"/></g><g transform="translate(410,74)"><path d="M-8,6 l9,-9 l5,5 l-9,9 z" fill="#e8c890"/><path d="M2,-4 l5,-5 l3,3 l-5,5 z" fill="#777"/></g><g transform="translate(446,74)"><path d="M-6,-3 a8,7 0 1 1 3,10" stroke="#1f6ad6" stroke-width="3.5" fill="none"/><path d="M-10,-6 l8,-1 l-4,7 z" fill="#1f6ad6"/></g><g transform="translate(475,74)"><path d="M6,-3 a8,7 0 1 0 -3,10" stroke="#7ba6dc" stroke-width="3.5" fill="none"/><path d="M10,-6 l-8,-1 l4,7 z" fill="#7ba6dc"/></g><g transform="translate(512,74)"><path d="M-7,-7 L7,7 M7,-7 L-7,7" stroke="#e3241b" stroke-width="3.5"/></g><g transform="translate(539,74)"><path d="M-6,-8 h8 l4,4 v13 h-12 z" fill="#f4f4f4" stroke="#aaa"/><path d="M-4,-2 l7,7 M3,-2 l-7,7" stroke="#e02020" stroke-width="2.5"/></g><g transform="translate(578,74)"><circle r="9.5" fill="#2d6fc0"/><text x="-4.5" y="5.5" font-family="Liberation Sans" font-size="15" font-weight="bold" fill="#fff">?</text></g><rect x="274" y="63" width="1" height="23" fill="#6f7378"/><rect x="275" y="63" width="1.5" height="23" fill="#f4f4f4"/><rect x="427" y="63" width="1" height="23" fill="#6f7378"/><rect x="428" y="63" width="1.5" height="23" fill="#f4f4f4"/><rect x="493" y="63" width="1" height="23" fill="#6f7378"/><rect x="494" y="63" width="1.5" height="23" fill="#f4f4f4"/><rect x="559" y="63" width="1" height="23" fill="#6f7378"/><rect x="560" y="63" width="1.5" height="23" fill="#f4f4f4"/><rect x="615.5" y="61" width="3" height="2" fill="#1a1a1a"/><rect x="615.5" y="63" width="3" height="1.5" fill="#f0f0f0"/><rect x="615.5" y="65" width="3" height="2" fill="#1a1a1a"/><rect x="615.5" y="67" width="3" height="1.5" fill="#f0f0f0"/><rect x="615.5" y="69" width="3" height="2" fill="#1a1a1a"/><rect x="615.5" y="71" width="3" height="1.5" fill="#f0f0f0"/><rect x="615.5" y="73" width="3" height="2" fill="#1a1a1a"/><rect x="615.5" y="75" width="3" height="1.5" fill="#f0f0f0"/><rect x="615.5" y="77" width="3" height="2" fill="#1a1a1a"/><rect x="615.5" y="79" width="3" height="1.5" fill="#f0f0f0"/><rect x="615.5" y="81" width="3" height="2" fill="#1a1a1a"/><rect x="615.5" y="83" width="3" height="1.5" fill="#f0f0f0"/><rect x="615.5" y="85" width="3" height="2" fill="#1a1a1a"/><rect x="615.5" y="87" width="3" height="1.5" fill="#f0f0f0"/><g transform="translate(635,74)"><text x="-8" y="8" font-family="Liberation Sans" font-size="19" font-weight="bold" fill="#2a4fb8">A</text><rect x="-9" y="9" width="18" height="2" fill="#1a3a8a"/></g><g transform="translate(663,74)"><text x="-8" y="8" font-family="Liberation Sans" font-size="19" font-weight="bold" fill="#2a4fb8">A</text></g><g transform="translate(693,74)"><text x="-8" y="8" font-family="Liberation Sans" font-size="19" font-weight="bold" fill="#2a4fb8">A</text><rect x="2" y="-10" width="8" height="10" fill="#fff" stroke="#777"/><path d="M3,-7 h6 M3,-4 h6" stroke="#888"/></g><g transform="translate(722,74)"><text x="-8" y="8" font-family="Liberation Sans" font-size="19" font-weight="bold" fill="#2a4fb8">A</text><path d="M-1,8 l9,-9 l2,2 l-9,9 z" fill="#e8b060"/></g><g transform="translate(752,74)"><text x="-8" y="8" font-family="Liberation Sans" font-size="19" font-weight="bold" fill="#2a4fb8">A</text><circle cx="6" cy="6" r="3" fill="#fff" stroke="#555" stroke-width="1.5"/></g><rect x="769" y="63" width="1" height="23" fill="#6f7378"/><rect x="770" y="63" width="1.5" height="23" fill="#f4f4f4"/><rect x="921.5" y="61" width="3" height="2" fill="#1a1a1a"/><rect x="921.5" y="63" width="3" height="1.5" fill="#f0f0f0"/><rect x="921.5" y="65" width="3" height="2" fill="#1a1a1a"/><rect x="921.5" y="67" width="3" height="1.5" fill="#f0f0f0"/><rect x="921.5" y="69" width="3" height="2" fill="#1a1a1a"/><rect x="921.5" y="71" width="3" height="1.5" fill="#f0f0f0"/><rect x="921.5" y="73" width="3" height="2" fill="#1a1a1a"/><rect x="921.5" y="75" width="3" height="1.5" fill="#f0f0f0"/><rect x="921.5" y="77" width="3" height="2" fill="#1a1a1a"/><rect x="921.5" y="79" width="3" height="1.5" fill="#f0f0f0"/><rect x="921.5" y="81" width="3" height="2" fill="#1a1a1a"/><rect x="921.5" y="83" width="3" height="1.5" fill="#f0f0f0"/><rect x="921.5" y="85" width="3" height="2" fill="#1a1a1a"/><rect x="921.5" y="87" width="3" height="1.5" fill="#f0f0f0"/><rect x="1023" y="61" width="27" height="26" fill="url(#hlg)" stroke="#c9d6e6" stroke-width="1"/><rect x="1051" y="61" width="27" height="26" fill="url(#hlg)" stroke="#c9d6e6" stroke-width="1"/><rect x="1080" y="61" width="27" height="26" fill="url(#hlg)" stroke="#c9d6e6" stroke-width="1"/><rect x="1110" y="61" width="27" height="26" fill="url(#hlg)" stroke="#c9d6e6" stroke-width="1"/><rect x="1168" y="61" width="27" height="26" fill="url(#hlg)" stroke="#c9d6e6" stroke-width="1"/><rect x="1283" y="61" width="28" height="26" fill="url(#hlg)" stroke="#c9d6e6" stroke-width="1"/><rect x="1378" y="61" width="28" height="26" fill="url(#hlg)" stroke="#c9d6e6" stroke-width="1"/><g transform="translate(942,74)"><path d="M-10,4 h10" stroke="#666" stroke-width="1.3"/><circle cx="-10" cy="4" r="2" fill="#777"/><circle cx="2" cy="-6" r="3.5" fill="#f0b040"/><rect x="0.5" y="1.5" width="5" height="5" fill="#e31b1b" stroke="#fff" stroke-width="0.7"/></g><g transform="translate(970,74)"><path d="M-6,8 v-10 h10" stroke="#666" stroke-width="1.3" fill="none"/><circle cx="-4" cy="-3" r="4" fill="#f0b040"/><rect x="2.5" y="-4.5" width="5" height="5" fill="#e31b1b" stroke="#fff" stroke-width="0.7"/></g><g transform="translate(998,74)"><path d="M0,-8 h10 M-5,8 h10" stroke="#777" stroke-width="1.3"/><circle cx="1" cy="-7" r="3.5" fill="#f0b040"/><rect x="-8.5" y="-9.5" width="5" height="5" fill="#e31b1b" stroke="#fff" stroke-width="0.7"/><rect x="-4.5" y="-2.5" width="5" height="5" fill="#e31b1b" stroke="#fff" stroke-width="0.7"/><rect x="3.5" y="5.5" width="5" height="5" fill="#e31b1b" stroke="#fff" stroke-width="0.7"/></g><g transform="translate(1036,74)"><circle r="8.5" fill="none" stroke="#2a3a55" stroke-width="1.8"/><rect x="4.5" y="3.5" width="5" height="5" fill="#e31b1b" stroke="#fff" stroke-width="0.7"/></g><g transform="translate(1065,74)"><path d="M-9,-9 L6,6" stroke="#2a3a55" stroke-width="1.8"/><rect x="2.5" y="3.5" width="5" height="5" fill="#e31b1b" stroke="#fff" stroke-width="0.7"/></g><g transform="translate(1094,74)"><path d="M-9,-6 h18 M-9,8 l9,-6 l9,6" stroke="#2a3a55" stroke-width="1.8" fill="none"/><rect x="-2.5" y="-8.5" width="5" height="5" fill="#e31b1b" stroke="#fff" stroke-width="0.7"/><rect x="-2.5" y="-0.5" width="5" height="5" fill="#e31b1b" stroke="#fff" stroke-width="0.7"/></g><g transform="translate(1123,74)"><circle r="8.5" fill="none" stroke="#2a3a55" stroke-width="1.8"/><rect x="-2.5" y="-2.5" width="5" height="5" fill="#e31b1b" stroke="#fff" stroke-width="0.7"/></g><g transform="translate(1152,74)"><rect x="-9" y="-9" width="18" height="18" fill="none" stroke="#333" stroke-width="1.8"/><rect x="-2.5" y="-3.5" width="5" height="5" fill="#e31b1b" stroke="#fff" stroke-width="0.7"/></g><g transform="translate(1181,74)"><path d="M0,-10 V6 M-10,6 H10" stroke="#2a3a55" stroke-width="1.8"/><rect x="-2.5" y="3.5" width="5" height="5" fill="#e31b1b" stroke="#fff" stroke-width="0.7"/></g><g transform="translate(1211,74)"><path d="M-6,-10 L3,-1" stroke="#333" stroke-width="1.8"/><circle cx="0" cy="3" r="6" fill="none" stroke="#333" stroke-width="1.8"/><rect x="1.5" y="-3.5" width="5" height="5" fill="#e31b1b" stroke="#fff" stroke-width="0.7"/></g><g transform="translate(1239,74)"><circle r="8.5" fill="none" stroke="#333" stroke-width="1.5"/><rect x="-2.5" y="-11.5" width="5" height="5" fill="#e31b1b" stroke="#fff" stroke-width="0.7"/><rect x="-2.5" y="6.5" width="5" height="5" fill="#e31b1b" stroke="#fff" stroke-width="0.7"/><rect x="-11.5" y="-2.5" width="5" height="5" fill="#e31b1b" stroke="#fff" stroke-width="0.7"/><rect x="6.5" y="-2.5" width="5" height="5" fill="#e31b1b" stroke="#fff" stroke-width="0.7"/></g><g transform="translate(1268,74)"><rect x="-7" y="-7" width="12" height="8" fill="#fff" stroke="#333" stroke-width="1.3"/><circle cx="5" cy="3" r="5" fill="#fff" stroke="#333" stroke-width="1.5"/><rect x="-10.5" y="-1.5" width="5" height="5" fill="#e31b1b" stroke="#fff" stroke-width="0.7"/></g><g transform="translate(1297,74)"><rect x="-2.5" y="-3.5" width="5" height="5" fill="#e31b1b" stroke="#fff" stroke-width="0.7"/></g><g transform="translate(1326,74)"><path d="M-8,-8 L8,8" stroke="#333" stroke-width="1.5" stroke-dasharray="3,2"/><rect x="-2.5" y="-2.5" width="5" height="5" fill="#e31b1b" stroke="#fff" stroke-width="0.7"/></g><g transform="translate(1354,74)"><path d="M-7,-7 L7,7 M-2,-10 L10,3" stroke="#333" stroke-width="1.5"/><rect x="-3.5" y="-1.5" width="5" height="5" fill="#e31b1b" stroke="#fff" stroke-width="0.7"/></g><g transform="translate(1392,74)"><path d="M-10,-5 L10,5 M-10,5 L10,-5" stroke="#2a3a55" stroke-width="1.5"/><rect x="-2.5" y="-2.5" width="5" height="5" fill="#e31b1b" stroke="#fff" stroke-width="0.7"/></g><g transform="translate(1421,74)"><path d="M-10,-8 L4,0 L-10,8 M-3,-10 V10" stroke="#333" stroke-width="1.3" fill="none"/><path d="M-3,-10 V10" stroke="#fff" stroke-width="1.5"/><rect x="1.5" y="-2.5" width="5" height="5" fill="#e31b1b" stroke="#fff" stroke-width="0.7"/></g><g transform="translate(1458,74)"><circle cx="4" cy="-8" r="2.5" fill="#555"/><path d="M-2,-4 l6,0 l2,4 M1,-4 l-3,7 l-6,2 M-2,3 l5,3 l0,5 M4,0 l4,0" stroke="#555" stroke-width="2.3" fill="none"/></g><g transform="translate(1487,74)"><path d="M-8,-8 L8,8 M8,-8 L-8,8" stroke="#e3241b" stroke-width="4"/><rect x="-9.5" y="-2.5" width="5" height="5" fill="#e31b1b" stroke="#fff" stroke-width="0.7"/><rect x="4.5" y="-2.5" width="5" height="5" fill="#e31b1b" stroke="#fff" stroke-width="0.7"/></g><rect x="1017" y="63" width="1" height="23" fill="#6f7378"/><rect x="1018" y="63" width="1.5" height="23" fill="#f4f4f4"/><rect x="1373" y="63" width="1" height="23" fill="#6f7378"/><rect x="1374" y="63" width="1.5" height="23" fill="#f4f4f4"/><rect x="1439" y="63" width="1" height="23" fill="#6f7378"/><rect x="1440" y="63" width="1.5" height="23" fill="#f4f4f4"/><rect x="5.5" y="100" width="3" height="2" fill="#1a1a1a"/><rect x="5.5" y="102" width="3" height="1.5" fill="#f0f0f0"/><rect x="5.5" y="104" width="3" height="2" fill="#1a1a1a"/><rect x="5.5" y="106" width="3" height="1.5" fill="#f0f0f0"/><rect x="5.5" y="108" width="3" height="2" fill="#1a1a1a"/><rect x="5.5" y="110" width="3" height="1.5" fill="#f0f0f0"/><rect x="5.5" y="112" width="3" height="2" fill="#1a1a1a"/><rect x="5.5" y="114" width="3" height="1.5" fill="#f0f0f0"/><rect x="5.5" y="116" width="3" height="2" fill="#1a1a1a"/><rect x="5.5" y="118" width="3" height="1.5" fill="#f0f0f0"/><rect x="5.5" y="120" width="3" height="2" fill="#1a1a1a"/><rect x="5.5" y="122" width="3" height="1.5" fill="#f0f0f0"/><rect x="5.5" y="124" width="3" height="2" fill="#1a1a1a"/><rect x="5.5" y="126" width="3" height="1.5" fill="#f0f0f0"/><rect x="5.5" y="128" width="3" height="2" fill="#1a1a1a"/><rect x="5.5" y="130" width="3" height="1.5" fill="#f0f0f0"/><g transform="translate(25,114)"><path d="M-8,-6 l5,-4 h12 l-5,4 z" fill="#3a5fb0"/><path d="M-8,0 l5,-4 h12 l-5,4 z" fill="#fff" stroke="#666" stroke-width="0.6"/><circle cx="-1" cy="-2" r="2" fill="#e02020"/><path d="M-8,6 l5,-4 h12 l-5,4 z" fill="#fff" stroke="#666" stroke-width="0.6"/></g><g transform="translate(53,114)"><path d="M-8,-3 l5,-4 h12 l-5,4 z" fill="#fff" stroke="#777" stroke-width="0.6"/><circle cx="2" cy="5" r="3" fill="#6ab0f0"/></g><g transform="translate(82,114)"><path d="M-8,-5 l5,-4 h12 l-5,4 z" fill="#fff" stroke="#555" stroke-width="0.8"/><path d="M-8,1 l5,-4 h12 l-5,4 z" fill="#fff" stroke="#555" stroke-width="0.8"/><circle cx="5" cy="6" r="3" fill="#fff" stroke="#444" stroke-width="1.3"/></g><rect x="100" y="102" width="1" height="25" fill="#6f7378"/><rect x="101" y="102" width="1.5" height="25" fill="#f4f4f4"/><rect x="355" y="99" width="28" height="31" fill="url(#hlg)" stroke="#c9d6e6" stroke-width="1"/><g transform="translate(369,114)"><path d="M-9,-6 l5,-4 h13 l-5,4 z" fill="#fff" stroke="#555" stroke-width="0.8"/><path d="M-9,0 l5,-4 h13 l-5,4 z" fill="#fff" stroke="#555" stroke-width="0.8"/><path d="M-1,0 h10 l-4,5 v5 l-2,-1 v-4 z" fill="#333"/></g><g transform="translate(118,114)"><ellipse cx="0" cy="-2" rx="5" ry="6.5" fill="#f5ec70" stroke="#a09030" stroke-width="0.8"/><rect x="-2.5" y="4" width="5" height="4" fill="#777"/></g><g transform="translate(140,114)"><circle r="5" fill="#f0f070" stroke="#333" stroke-width="1.2"/><path d="M0,-9 V-6 M0,6 V9 M-9,0 H-6 M6,0 H9 M-6,-6 l2,2 M6,6 l-2,-2 M-6,6 l2,-2 M6,-6 l-2,2" stroke="#333" stroke-width="1.2"/></g><g transform="translate(163,114)"><rect x="-6" y="-6" width="13" height="13" fill="#eee" stroke="#ccc"/><path d="M-5,-5 l8,8 M3,-5 l-8,8 M-1,-6 v12" stroke="#ccc"/></g><g transform="translate(184,114)"><rect x="-8" y="-1" width="11" height="9" fill="#e8d8a0" stroke="#777" stroke-width="0.8"/><path d="M1,-1 v-5 a3,3 0 0 1 6,0 v3" stroke="#1a2f7a" stroke-width="1.8" fill="none"/></g><rect x="387" y="102" width="1" height="25" fill="#6f7378"/><rect x="388" y="102" width="1.5" height="25" fill="#f4f4f4"/><rect x="583" y="102" width="1" height="25" fill="#6f7378"/><rect x="584" y="102" width="1.5" height="25" fill="#f4f4f4"/><rect x="841" y="102" width="1" height="25" fill="#6f7378"/><rect x="842" y="102" width="1.5" height="25" fill="#f4f4f4"/><rect x="1099" y="102" width="1" height="25" fill="#6f7378"/><rect x="1100" y="102" width="1.5" height="25" fill="#f4f4f4"/><rect x="1251.5" y="100" width="3" height="2" fill="#1a1a1a"/><rect x="1251.5" y="102" width="3" height="1.5" fill="#f0f0f0"/><rect x="1251.5" y="104" width="3" height="2" fill="#1a1a1a"/><rect x="1251.5" y="106" width="3" height="1.5" fill="#f0f0f0"/><rect x="1251.5" y="108" width="3" height="2" fill="#1a1a1a"/><rect x="1251.5" y="110" width="3" height="1.5" fill="#f0f0f0"/><rect x="1251.5" y="112" width="3" height="2" fill="#1a1a1a"/><rect x="1251.5" y="114" width="3" height="1.5" fill="#f0f0f0"/><rect x="1251.5" y="116" width="3" height="2" fill="#1a1a1a"/><rect x="1251.5" y="118" width="3" height="1.5" fill="#f0f0f0"/><rect x="1251.5" y="120" width="3" height="2" fill="#1a1a1a"/><rect x="1251.5" y="122" width="3" height="1.5" fill="#f0f0f0"/><rect x="1251.5" y="124" width="3" height="2" fill="#1a1a1a"/><rect x="1251.5" y="126" width="3" height="1.5" fill="#f0f0f0"/><rect x="1251.5" y="128" width="3" height="2" fill="#1a1a1a"/><rect x="1251.5" y="130" width="3" height="1.5" fill="#f0f0f0"/><g transform="translate(1271,112)"><circle r="8.5" fill="#fff" stroke="#333" stroke-width="1.8"/></g><g transform="translate(1300,112)"><circle r="8.5" fill="#b8d4f0" stroke="#3a5a90" stroke-width="1.8"/><path d="M-7,-4 Q0,6 7,-4 M-5,6 Q0,-4 5,6" stroke="#fff" stroke-width="1.2" fill="none"/></g><g transform="translate(1329,112)"><circle r="8.5" fill="#fff" stroke="#555" stroke-width="1.5"/><path d="M-7,-3 Q0,6 7,-3 M-4,7 Q0,-2 4,7" stroke="#777" stroke-width="1" fill="none"/></g><g transform="translate(1358,112)"><circle r="9" fill="url(#sphg)"/></g><g transform="translate(1387,112)"><circle r="8.5" fill="#f4f4f4" stroke="#444" stroke-width="1.5"/><path d="M-7,-4 Q0,6 7,-4 M-7,4 Q0,-6 7,4 M-4,-7 Q4,0 -4,7 M4,-7 Q-4,0 4,7" stroke="#555" stroke-width="0.9" fill="none"/></g><rect x="4.5" y="136" width="3" height="2" fill="#1a1a1a"/><rect x="4.5" y="138" width="3" height="1.5" fill="#f0f0f0"/><rect x="4.5" y="140" width="3" height="2" fill="#1a1a1a"/><rect x="4.5" y="142" width="3" height="1.5" fill="#f0f0f0"/><rect x="4.5" y="144" width="3" height="2" fill="#1a1a1a"/><rect x="4.5" y="146" width="3" height="1.5" fill="#f0f0f0"/><rect x="4.5" y="148" width="3" height="2" fill="#1a1a1a"/><rect x="4.5" y="150" width="3" height="1.5" fill="#f0f0f0"/><rect x="4.5" y="152" width="3" height="2" fill="#1a1a1a"/><rect x="4.5" y="154" width="3" height="1.5" fill="#f0f0f0"/><rect x="4.5" y="156" width="3" height="2" fill="#1a1a1a"/><rect x="4.5" y="158" width="3" height="1.5" fill="#f0f0f0"/><rect x="4.5" y="160" width="3" height="2" fill="#1a1a1a"/><rect x="4.5" y="162" width="3" height="1.5" fill="#f0f0f0"/><rect x="948" y="136" width="27" height="27" fill="url(#hlg)" stroke="#c9d6e6" stroke-width="1"/><g transform="translate(24,150)"><path d="M0,-10 V10 M-10,0 H10" stroke="#333" stroke-width="1.5"/><path d="M0,-10 l-3,4 h6 z M0,10 l-3,-4 h6 z M-10,0 l4,-3 v6 z M10,0 l-4,-3 v6 z" fill="#333"/></g><g transform="translate(53,150)"><circle cx="-5" cy="-5" r="4" fill="none" stroke="#667" stroke-width="1.5"/><circle cx="0" cy="5" r="4" fill="none" stroke="#336" stroke-width="1.8"/><circle cx="6" cy="5" r="4" fill="none" stroke="#336" stroke-width="1.8"/><path d="M1,-6 l5,2 l-2,3" stroke="#333" stroke-width="1.3" fill="none"/></g><g transform="translate(82,150)"><circle cx="-5" cy="-5" r="5" fill="#2a6fd6"/><circle cx="4" cy="5" r="5.5" fill="#2a6fd6"/><path d="M2,-7 v6" stroke="#e02020" stroke-width="1.2"/></g><g transform="translate(110,150)"><path d="M9,-8 h-12 a7,7 0 0 0 0,14 h12 M9,-4 h-11 a3,3 0 0 0 0,6 h11" stroke="#556a88" stroke-width="1.8" fill="none"/></g><g transform="translate(140,150)"><rect x="-9" y="-9" width="18" height="18" fill="none" stroke="#4a6a95" stroke-width="1.5"/><rect x="-9" y="1" width="8" height="8" fill="none" stroke="#333" stroke-width="1.5"/></g><g transform="translate(169,150)"><path d="M-7,-7 L7,7 M7,-7 L-7,7" stroke="#e3241b" stroke-width="3.5"/></g><g transform="translate(205,150)"><circle r="8" fill="none" stroke="#2a3ab0" stroke-width="3"/><circle r="6" fill="none" stroke="#e02020" stroke-width="2" stroke-dasharray="6,4"/><circle r="9" fill="none" stroke="#30c050" stroke-width="1.5" stroke-dasharray="5,8"/><path d="M-2,-2 l4,3" stroke="#2a3ab0" stroke-width="2"/></g><g transform="translate(234,150)"><path d="M6,-7 A9,9 0 1 0 8,5" stroke="#444" stroke-width="1.8" fill="none"/><path d="M3,-10 l5,2 l-3,4" stroke="#444" stroke-width="1.3" fill="none"/></g><g transform="translate(264,150)"><path d="M-8,0 a8,5 0 0 0 16,0" stroke="#2a6fd6" stroke-width="2.5" fill="none"/><path d="M0,-10 V8" stroke="#e02020" stroke-width="1.2" stroke-dasharray="2,1.5"/><path d="M-8,0 l-2,-4 l5,1 z" fill="#2a6fd6"/></g><g transform="translate(300,150)"><path d="M-2,-9 L-9,7 H-2 Z" fill="none" stroke="#334" stroke-width="1.8"/><path d="M2,-9 L9,7 H2 Z" fill="#667" stroke="#334" stroke-width="1.3"/></g><g transform="translate(330,150)"><path d="M-3,-7 L-9,7 H-3 Z M3,-7 L9,7 H3 Z" fill="#d8f0e0" stroke="#4a9a6a" stroke-width="1.5"/><path d="M-8,-8 L8,8" stroke="#e02020" stroke-width="1"/></g><g transform="translate(368,150)"><rect x="-9" y="-9" width="7" height="7" fill="#2a6fd6"/><rect x="2" y="-9" width="7" height="7" fill="#2a6fd6"/><rect x="-9" y="2" width="7" height="7" fill="#777"/><path d="M2,9 h7 v-7 z" fill="#111"/><path d="M2,2 h7 l-7,7 z" fill="#2a6fd6"/></g><g transform="translate(403,150)"><path d="M-8,-4 v12 h16 v-12 h-4 M-2,-4 v-6 M3,-10 v6" stroke="#4a6aa5" stroke-width="1.6" fill="none"/></g><g transform="translate(434,150)"><rect x="-9" y="-6" width="18" height="12" fill="none" stroke="#2a8a4a" stroke-width="2.5"/></g><g transform="translate(463,150)"><rect x="-9" y="-6" width="18" height="12" fill="none" stroke="#2a8a4a" stroke-width="2.5"/></g><g transform="translate(490,150)"><path d="M-10,-9 h20" stroke="#777" stroke-width="1.3"/><path d="M-5,-8 l6,12 M4,-8 l-6,12" stroke="#4a6aa5" stroke-width="1.5"/><circle cx="-2" cy="7" r="2.5" fill="none" stroke="#4a6aa5" stroke-width="1.5"/><circle cx="3" cy="7" r="2.5" fill="none" stroke="#4a6aa5" stroke-width="1.5"/></g><g transform="translate(520,150)"><path d="M-9,-2 h16 l-4,-4 M9,3 h-16 l4,4" stroke="#3a9a5a" stroke-width="2" fill="none"/></g><g transform="translate(557,150)"><path d="M-7,-9 h12 l3,3 v10 h-12 l-3,-3 z" fill="none" stroke="#999" stroke-width="1"/><path d="M-9,9 l3,-4 h14 l-3,4 z" fill="#fff" stroke="#222" stroke-width="1.3"/></g><g transform="translate(594,150)"><rect x="-9" y="0" width="4" height="9" fill="none" stroke="#3a5aa0" stroke-width="1.5"/><rect x="2" y="-10" width="6" height="19" fill="none" stroke="#3a5aa0" stroke-width="1.5"/><path d="M-6,-3 l6,-6" stroke="#777" stroke-dasharray="2,2"/></g><g transform="translate(630,150)"><path d="M-10,6 h14" stroke="#333" stroke-dasharray="3,2" stroke-width="1.3"/><path d="M-4,-6 h10 M6,-10 v18" stroke="#3a6ac0" stroke-width="1.5"/><path d="M6,-6 l-3,-2 v4 z" fill="#3a6ac0"/><path d="M4,9 l5,-5 v5 z" fill="#111"/></g><g transform="translate(667,150)"><path d="M-10,-2 h20 M-10,3 h20 M-6,-9 v11 M0,-9 v11 M6,-9 v11" stroke="#445" stroke-width="1.5"/><rect x="-10" y="5" width="20" height="5" fill="#f08a1a"/><path d="M4,10 l6,-5 v5 z" fill="#111"/></g><g transform="translate(705,150)"><path d="M-8,9 v-8 a9,9 0 0 1 9,-9 h8" stroke="#445" stroke-width="1.6" fill="none"/><path d="M5,10 l5,-5 v5 z" fill="#111"/></g><g transform="translate(741,150)"><path d="M-9,3 a6,6 0 0 1 10,-3 L-1,8 h9" stroke="#3a6ac0" stroke-width="1.5" fill="none"/><circle cx="-9" cy="3" r="1.8" fill="#fff" stroke="#3a6ac0"/><circle cx="8" cy="8" r="1.8" fill="#fff" stroke="#3a6ac0"/><path d="M-3,2 l9,-9 l3,3 l-9,9 z" fill="#e8b060"/></g><g transform="translate(771,150)"><path d="M-9,8 c3,-12 8,2 12,-8 s4,-6 6,-8" stroke="#334" stroke-width="1.5" fill="none"/><path d="M-6,5 l9,-9 l3,3 l-9,9 z" fill="#e8b060"/><circle cx="-9" cy="8" r="1.8" fill="#fff" stroke="#3a6ac0"/></g><g transform="translate(801,150)"><text x="-8" y="7" font-family="Liberation Sans" font-size="18" font-weight="bold" fill="#2a4fb8">A</text><path d="M-2,9 l9,-9 l3,3 l-9,9 z" fill="#e8b060"/></g><g transform="translate(837,150)"><path d="M-6,-6 l12,12 l-3,3 l-12,-12 z" fill="#e02020"/><path d="M-9,-9 l3,3 M-6,-11 l1,4 M-11,-6 l4,1" stroke="#f0d020" stroke-width="2"/></g><g transform="translate(865,150)"><path d="M-6,-6 l12,12 l-3,3 l-12,-12 z" fill="#e02020"/><path d="M-9,-9 l3,3 M-6,-11 l1,4 M-11,-6 l4,1" stroke="#f0d020" stroke-width="2"/><circle cx="5" cy="-5" r="5" fill="#30b050"/><path d="M5,-8 v6 M2,-5 h6" stroke="#fff" stroke-width="1.5"/></g><g transform="translate(904,150)"><rect x="-7" y="-9" width="14" height="14" fill="none" stroke="#3a8a5a" stroke-width="1.5"/><path d="M-10,2 h3" stroke="#999"/></g><g transform="translate(931,150)"><rect x="-1" y="-9" width="10" height="8" fill="#333"/><rect x="-5" y="-7" width="6" height="6" fill="#e02020"/><path d="M-9,9 v-12 l10,12 z" fill="#9ad0f0" stroke="#3a6ac0"/></g><g transform="translate(961,150)"><rect x="-8" y="-10" width="16" height="20" fill="#fff" stroke="#3a5a90" stroke-width="1.3"/><rect x="-8" y="-10" width="16" height="4" fill="#3a5a90"/><circle cx="-4" cy="-1" r="1.5" fill="#555"/><circle cx="-4" cy="5" r="1.5" fill="#555"/><path d="M-1,-1 h6 M-1,5 h6" stroke="#555" stroke-width="1.3"/></g><rect x="187" y="139" width="1" height="22" fill="#6f7378"/><rect x="188" y="139" width="1.5" height="22" fill="#f4f4f4"/><rect x="282" y="139" width="1" height="22" fill="#6f7378"/><rect x="283" y="139" width="1.5" height="22" fill="#f4f4f4"/><rect x="348" y="139" width="1" height="22" fill="#6f7378"/><rect x="349" y="139" width="1.5" height="22" fill="#f4f4f4"/><rect x="385" y="139" width="1" height="22" fill="#6f7378"/><rect x="386" y="139" width="1.5" height="22" fill="#f4f4f4"/><rect x="538" y="139" width="1" height="22" fill="#6f7378"/><rect x="539" y="139" width="1.5" height="22" fill="#f4f4f4"/><rect x="575" y="139" width="1" height="22" fill="#6f7378"/><rect x="576" y="139" width="1.5" height="22" fill="#f4f4f4"/><rect x="612" y="139" width="1" height="22" fill="#6f7378"/><rect x="613" y="139" width="1.5" height="22" fill="#f4f4f4"/><rect x="649" y="139" width="1" height="22" fill="#6f7378"/><rect x="650" y="139" width="1.5" height="22" fill="#f4f4f4"/><rect x="686" y="139" width="1" height="22" fill="#6f7378"/><rect x="687" y="139" width="1.5" height="22" fill="#f4f4f4"/><rect x="724" y="139" width="1" height="22" fill="#6f7378"/><rect x="725" y="139" width="1.5" height="22" fill="#f4f4f4"/><rect x="818" y="139" width="1" height="22" fill="#6f7378"/><rect x="819" y="139" width="1.5" height="22" fill="#f4f4f4"/><rect x="884" y="139" width="1" height="22" fill="#6f7378"/><rect x="885" y="139" width="1.5" height="22" fill="#f4f4f4"/></svg>
<div id="tabbar" class="a">
<svg class="a" style="left:0;top:0" width="1879" height="30">
<path d="M5,29 L30,2 L170,2 L175,29 Z" fill="#6e6e6e"/>
<path d="M152,29 L172,2 L491,2 L491,29 Z" fill="#fdfdfd"/>
<path d="M491,29 L496,2 L603,2 L603,29 Z" fill="#6e6e6e"/>
</svg>
<div class="a" style="left:43px;top:7px;font-size:13.3px;color:#e8e8e8;white-space:nowrap">Strona Początkowa</div>
<div class="a" style="left:182px;top:6px;font-size:14.6px;font-weight:bold;color:#111;white-space:nowrap">Mapa elektroniczna - Obory SN +projekt</div>
<svg class="a" style="left:471px;top:8px" width="12" height="12"><path d="M1,1 L11,11 M11,1 L1,11" stroke="#111" stroke-width="2"/></svg>
<div class="a" style="left:506px;top:7px;font-size:13.3px;color:#e8e8e8;white-space:nowrap">Rysunek1.dwg</div>
<svg class="a" style="left:614px;top:8px" width="13" height="13"><path d="M6.5,0 V13 M0,6.5 H13" stroke="#111" stroke-width="2"/></svg>
<svg class="a" style="left:1860px;top:12px" width="13" height="8"><path d="M0,0 H13 L6.5,7 Z" fill="#111"/></svg>
</div>
<div id="lefttb" class="a"><svg class="a" style="left:0;top:0" width="41" height="585"><rect x="4" y="5" width="2" height="3" fill="#1a1a1a"/><rect x="6" y="5" width="1.5" height="3" fill="#eee"/><rect x="8" y="5" width="2" height="3" fill="#1a1a1a"/><rect x="10" y="5" width="1.5" height="3" fill="#eee"/><rect x="12" y="5" width="2" height="3" fill="#1a1a1a"/><rect x="14" y="5" width="1.5" height="3" fill="#eee"/><rect x="16" y="5" width="2" height="3" fill="#1a1a1a"/><rect x="18" y="5" width="1.5" height="3" fill="#eee"/><rect x="20" y="5" width="2" height="3" fill="#1a1a1a"/><rect x="22" y="5" width="1.5" height="3" fill="#eee"/><rect x="24" y="5" width="2" height="3" fill="#1a1a1a"/><rect x="26" y="5" width="1.5" height="3" fill="#eee"/><rect x="28" y="5" width="2" height="3" fill="#1a1a1a"/><rect x="30" y="5" width="1.5" height="3" fill="#eee"/><rect x="32" y="5" width="2" height="3" fill="#1a1a1a"/><rect x="34" y="5" width="1.5" height="3" fill="#eee"/><g transform="translate(17,24)"><path d="M-8,8 L7,-7" stroke="#2a3550" stroke-width="2.5"/><rect x="-10" y="6" width="4" height="4" fill="#dde8f8" stroke="#3a5fb0" stroke-width="0.8"/><rect x="5" y="-9" width="4" height="4" fill="#dde8f8" stroke="#3a5fb0" stroke-width="0.8"/><path d="M5,10 l5,-5 v5 z" fill="#111"/></g><g transform="translate(17,53)"><path d="M-4,-8 a7,8 0 0 0 0,16 h8" stroke="#2a3550" stroke-width="2" fill="none"/><rect x="-4" y="-10" width="4" height="4" fill="#dde8f8" stroke="#3a5fb0" stroke-width="0.8"/><rect x="4" y="6" width="4" height="4" fill="#dde8f8" stroke="#3a5fb0" stroke-width="0.8"/></g><g transform="translate(17,81)"><path d="M-8,-6 L6,8 M-6,-8 L8,6" stroke="#2a3550" stroke-width="2"/><rect x="-9" y="-11" width="4" height="4" fill="#dde8f8" stroke="#3a5fb0" stroke-width="0.8"/><rect x="5" y="6" width="4" height="4" fill="#dde8f8" stroke="#3a5fb0" stroke-width="0.8"/></g><g transform="translate(17,109)"><path d="M-8,8 c-2,-10 6,-8 6,-2 s8,8 8,-10" stroke="#2a3550" stroke-width="2" fill="none"/><rect x="-10" y="-10" width="4" height="4" fill="#dde8f8" stroke="#3a5fb0" stroke-width="0.8"/><rect x="6" y="-10" width="4" height="4" fill="#dde8f8" stroke="#3a5fb0" stroke-width="0.8"/><rect x="-10" y="6" width="4" height="4" fill="#dde8f8" stroke="#3a5fb0" stroke-width="0.8"/><rect x="2" y="2" width="4" height="4" fill="#dde8f8" stroke="#3a5fb0" stroke-width="0.8"/><path d="M5,10 l5,-5 v5 z" fill="#111"/></g><g transform="translate(17,138)"><path d="M-8,-8 c4,2 2,6 -1,8 c-3,3 2,6 2,8" stroke="#2a3550" stroke-width="2.5" fill="none"/><path d="M-3,6 l10,-10 l3,3 l-10,10 z" fill="#e8a848"/></g><g transform="translate(17,172)"><circle r="8" fill="#eef2f8" stroke="#2a3550" stroke-width="2"/><path d="M0,0 l5,-4" stroke="#2a3550"/><rect x="-2" y="-2" width="4" height="4" fill="#dde8f8" stroke="#3a5fb0" stroke-width="0.8"/><path d="M5,10 l5,-5 v5 z" fill="#111"/></g><g transform="translate(17,200)"><path d="M-8,8 l4,-8 a8,8 0 0 1 10,-6" stroke="#2a3550" stroke-width="1.5" fill="none"/><rect x="-10" y="6" width="4" height="4" fill="#dde8f8" stroke="#3a5fb0" stroke-width="0.8"/><rect x="-6" y="-2" width="4" height="4" fill="#dde8f8" stroke="#3a5fb0" stroke-width="0.8"/><rect x="5" y="-9" width="4" height="4" fill="#dde8f8" stroke="#3a5fb0" stroke-width="0.8"/><path d="M5,10 l5,-5 v5 z" fill="#111"/></g><g transform="translate(17,228)"><ellipse rx="9" ry="6" fill="#eef2f8" stroke="#2a3550" stroke-width="2"/><rect x="-2" y="-8" width="4" height="4" fill="#dde8f8" stroke="#3a5fb0" stroke-width="0.8"/><rect x="-11" y="-2" width="4" height="4" fill="#dde8f8" stroke="#3a5fb0" stroke-width="0.8"/><rect x="7" y="-2" width="4" height="4" fill="#dde8f8" stroke="#3a5fb0" stroke-width="0.8"/><path d="M5,10 l5,-5 v5 z" fill="#111"/></g><g transform="translate(17,256)"><path d="M-8,0 a8,8 0 0 1 16,0 v4" stroke="#2a3550" stroke-width="2" fill="none"/><rect x="-10" y="0" width="4" height="4" fill="#dde8f8" stroke="#3a5fb0" stroke-width="0.8"/><rect x="0" y="3" width="4" height="4" fill="#dde8f8" stroke="#3a5fb0" stroke-width="0.8"/><path d="M5,10 l5,-5 v5 z" fill="#111"/></g><g transform="translate(17,292)"><rect x="-2.5" y="-2.5" width="5" height="5" fill="#fff" stroke="#222" stroke-width="1.2"/></g><g transform="translate(17,327)"><path d="M-9,-7 l18,-3 M-9,-3 l18,-3 M-9,1 l18,-3 M-9,5 l18,-3 M-9,9 l18,-3" stroke="#555" stroke-width="1.6"/></g><g transform="translate(17,356)"><rect x="-9" y="-7" width="17" height="12" fill="#fff" stroke="#2a3550" stroke-width="1.5"/><rect x="-11" y="3" width="4" height="4" fill="#dde8f8" stroke="#3a5fb0" stroke-width="0.8"/><rect x="6" y="-9" width="4" height="4" fill="#dde8f8" stroke="#3a5fb0" stroke-width="0.8"/><path d="M5,10 l5,-5 v5 z" fill="#111"/></g><g transform="translate(17,383)"><rect x="-8" y="-8" width="16" height="16" fill="none" stroke="#3a5ac0" stroke-width="3" stroke-dasharray="2,2"/><path d="M-4,-4 h6 l2,2 v6 h-8 z" fill="#fff" stroke="#3a5ac0"/></g><g transform="translate(17,412)"><path d="M-7,5 a4,4 0 0 1 -1,-7 a4,4 0 0 1 6,-5 a4,4 0 0 1 7,1 a4,4 0 0 1 3,7 a4,4 0 0 1 -4,6 a4,4 0 0 1 -7,0 z" fill="#fff" stroke="#444" stroke-width="1.5"/></g><g transform="translate(17,448)"><circle r="8" fill="none" stroke="#fff" stroke-width="4"/><circle r="9.5" fill="none" stroke="#444" stroke-width="1"/><circle r="6" fill="none" stroke="#444" stroke-width="1"/></g><g transform="translate(17,475)"><rect x="-9" y="-9" width="16" height="9" fill="#fff" stroke="#333" stroke-width="1.3"/><path d="M-3,0 l3,5 l8,3" stroke="#333" stroke-width="1.3" fill="none"/></g><g transform="translate(17,503)"><path d="M-7,9 v-7 l8,-8 h8 M-3,9 v-5 l6,-6 h6" stroke="#3a5a90" stroke-width="1.5" fill="none"/><path d="M-7,9 h4" stroke="#3a5a90" stroke-width="1.5"/></g><g transform="translate(17,538)"><path d="M-8,3 V-6 H6 V3" fill="#eef" stroke="#333" stroke-width="1.5"/><path d="M-2,3 a5,5 0 0 1 9,0" fill="none" stroke="#333"/></g><g transform="translate(17,567)"><path d="M-8,-2 a8,8 0 0 1 14,-4 M8,2 a8,8 0 0 1 -14,4" stroke="#2a6fd6" stroke-width="3" fill="none"/><path d="M6,-9 v6 h-6 z M-6,9 v-6 h6 z" fill="#2a6fd6"/><path d="M5,10 l5,-5 v5 z" fill="#111"/></g><rect x="8" y="155" width="20" height="1" fill="#f4f4f4"/><rect x="8" y="156" width="20" height="1" fill="#777"/><rect x="8" y="310" width="20" height="1" fill="#f4f4f4"/><rect x="8" y="311" width="20" height="1" fill="#777"/><rect x="8" y="430" width="20" height="1" fill="#f4f4f4"/><rect x="8" y="431" width="20" height="1" fill="#777"/><rect x="8" y="522" width="20" height="1" fill="#f4f4f4"/><rect x="8" y="523" width="20" height="1" fill="#777"/><rect x="0" y="540" width="41" height="1" fill="#8e9298"/><rect x="2" y="548" width="2" height="3" fill="#1a1a1a"/><rect x="4" y="548" width="1.5" height="3" fill="#eee"/><rect x="6" y="548" width="2" height="3" fill="#1a1a1a"/><rect x="8" y="548" width="1.5" height="3" fill="#eee"/><rect x="10" y="548" width="2" height="3" fill="#1a1a1a"/><rect x="12" y="548" width="1.5" height="3" fill="#eee"/><rect x="14" y="548" width="2" height="3" fill="#1a1a1a"/><rect x="16" y="548" width="1.5" height="3" fill="#eee"/><rect x="18" y="548" width="2" height="3" fill="#1a1a1a"/><rect x="20" y="548" width="1.5" height="3" fill="#eee"/><rect x="22" y="548" width="2" height="3" fill="#1a1a1a"/><rect x="24" y="548" width="1.5" height="3" fill="#eee"/><rect x="26" y="548" width="2" height="3" fill="#1a1a1a"/><rect x="28" y="548" width="1.5" height="3" fill="#eee"/><rect x="30" y="548" width="2" height="3" fill="#1a1a1a"/><rect x="32" y="548" width="1.5" height="3" fill="#eee"/><rect x="34" y="548" width="2" height="3" fill="#1a1a1a"/><rect x="36" y="548" width="1.5" height="3" fill="#eee"/></svg></div>
<div id="props" class="a">
<div class="a" style="left:0;top:0;width:251px;height:23px;background:#a8a8a8"></div>
<div class="a" style="left:3px;top:4px;width:2px;height:16px;border-left:2px dotted #444"></div>
<div class="a" style="left:14px;top:3px;font-size:16px;font-weight:bold;color:#111">Właściwości</div>
<div class="a" style="left:0;top:23px;width:251px;height:529px;background:#f4f4f4;border-top:1px solid #fff"></div>
<svg class="a" style="left:96px;top:35px" width="132" height="24">
<path d="M3,2 H11 M5,2 V22 M9,8 H15 M11,8 V20 H13 M14,13 H21 M14,19 H21" stroke="#111" stroke-width="2.4" fill="none"/>
<rect x="30" y="7" width="12" height="12" fill="#e8f0f8" stroke="#333" stroke-width="1.2"/><rect x="35" y="12" width="13" height="10" fill="#3ab07a" stroke="#333" stroke-width="1.2"/><path d="M37,16 l3,3 l5,-5" stroke="#fff" stroke-width="1.8" fill="none"/><circle cx="45" cy="7" r="5" fill="#3ac08a"/><path d="M45,4 v6 M42,7 h6" stroke="#fff" stroke-width="1.5"/>
<circle cx="62" cy="14" r="7.5" fill="#d0d8f0" stroke="#666" stroke-width="1.8" stroke-dasharray="3,1.5"/><rect x="66" y="2" width="8" height="20" fill="#7a8a80"/><rect x="67" y="3" width="6" height="5" fill="#8ad070"/>
<path d="M80,3 H94 L89,10 V22 H85 V10 Z" fill="#1a5ab8"/><path d="M87,11 V21" stroke="#9ad0f8" stroke-width="1.3"/><path d="M93,6 l5,1 l-2,4 l3,4 l-2,2 l-3,-4" stroke="#666" stroke-width="1.5" fill="#ddd"/>
<path d="M108,3 H127 L120,11 V22 H116 V11 Z" fill="#1a5ab8"/><path d="M118,11 V21 M112,5 H124" stroke="#9ad0f8" stroke-width="1.3"/><path d="M107,10 l8,-6" stroke="#e8a838" stroke-width="2.5"/>
</svg>
<div class="a" style="left:19px;top:37px;width:54px;height:23px;background:#fff;border:1px solid #dadada;font-size:13px;padding:3px 0 0 3px;color:#111">Brak<svg class="a" style="left:38px;top:8px" width="10" height="6"><path d="M1,1 L5,5 L9,1" stroke="#555" fill="none"/></svg></div>
<div class="a" style="left:4px;top:75px;width:11px;height:470px;background:#c4c4c4"></div>
<div class="a" style="left:4px;top:520px;width:11px;height:25px;background:#e8e8e8"></div>
<div class="ph" style="top:75px">Ogólne<svg class="a" style="right:9px;top:10px" width="11" height="6"><path d="M0,6 L5.5,0 L11,6 Z" fill="#111"/></svg></div>
<div class="pr" style="top:103px"><div class="pn">Kolor</div><div class="pv" style="background:#fff"><span style="display:inline-block;width:19px;height:18px;background:#e00;vertical-align:-4px;margin-right:4px;border:1px solid #900"></span>Czerwony</div></div>
<div class="pr" style="top:131px"><div class="pn">WARSTWA</div><div class="pv" style="background:#fff">Wysokosci</div></div>
<div class="pr" style="top:159px"><div class="pn">TYP LINII</div><div class="pv" style="background:#fff"></div></div>
<div class="pr" style="top:187px"><div class="pn">Skala Typu Li...</div><div class="pv" style="background:#fff">1.0000</div></div>
<div class="pr" style="top:215px"><div class="pn">Grubość Linii</div><div class="pv" style="background:#fff"><span style="display:inline-block;width:30px;border-top:1px solid #111;vertical-align:4px;margin-right:5px"></span>JakWar...</div></div>
<div class="pr" style="top:243px"><div class="pn">Grubość</div><div class="pv" style="background:#fff">0</div></div>
<div class="pr" style="top:271px"><div class="pn">Przezroczysto...</div><div class="pv" style="background:#fff">JakWarstwa</div></div>
<div class="ph" style="top:305px">Wizualizacja 3D<svg class="a" style="right:9px;top:10px" width="11" height="6"><path d="M0,6 L5.5,0 L11,6 Z" fill="#111"/></svg></div>
<div class="pr" style="top:332px"><div class="pn">Materiał</div><div class="pv" style="background:#fff">ByLayer</div></div>
<div class="pr" style="top:360px"><div class="pn">Wyświetlanie ...</div><div class="pv" style="background:#f0f0f0">Cienie rzucan...</div></div>
<div class="ph" style="top:393px">Styl drukowania<svg class="a" style="right:9px;top:10px" width="11" height="6"><path d="M0,6 L5.5,0 L11,6 Z" fill="#111"/></svg></div>
<div class="pr" style="top:421px"><div class="pn">Print style</div><div class="pv" style="background:#f0f0f0">ByColor</div></div>
<div class="pr" style="top:449px"><div class="pn">Tabela styli d...</div><div class="pv" style="background:#fff">Brak</div></div>
<div class="pr" style="top:477px"><div class="pn">Drukuj tabelę ...</div><div class="pv" style="background:#f0f0f0">Model</div></div>
<div class="pr" style="top:505px"><div class="pn">Typ wydruku t...</div><div class="pv" style="background:#f0f0f0">Styl druku zal...</div></div>
<div class="a" style="left:19px;top:537px;width:222px;height:8px;background:linear-gradient(#b8b8b8,#a0a0a0)"></div>
</div>
<div id="draw" class="a"><svg width="1623" height="531" viewBox="296 196 1623 531" style="position:absolute;left:0;top:0">
<rect x="302" y="202" width="41" height="19" fill="#2c2c2c"/>
<text x="308" y="216" font-family="Liberation Sans" font-size="11" fill="#5e5e5e">&amp;Góra</text>
<rect x="349" y="202" width="85" height="19" fill="#2c2c2c"/>
<text x="355" y="216" font-family="Liberation Sans" font-size="11" fill="#5e5e5e">Szkieletowy 2D</text>
<g fill="none" stroke-linejoin="miter" stroke-linecap="butt">
<!-- thick white buildings -->
<path d="M658,196 L773,258 L700,365 L587,304 Z" stroke="#fff" stroke-width="5"/>
<path d="M857,106 L1046,210 L969,336 L783.5,227 Z" stroke="#fff" stroke-width="5"/>
<path d="M530,467 L474,437 L408.5,537 L508,598 L477,651 L604,730" stroke="#fff" stroke-width="5"/>
<path d="M1232,324 L1273,285 L1262,277 L1325,196" stroke="#fff" stroke-width="5"/>
<path d="M1325,196 L1452,265 L1458,312 L1523,352 L1460,452 L1429,436 L1406,469 L1392,460 L1360,515" stroke="#fff" stroke-width="5"/>
<path d="M690,595 L609.5,727" stroke="#ddd" stroke-width="5"/>
<!-- green -->
<path d="M1477.3,243.3 L1559.8,293.9 L1541.2,319.9 L1454.7,269.3 Z M1469.5,254.6 L1525.5,286" stroke="#fff" stroke-width="1"/>
<path d="M760,192 L291,592" stroke="#14874a" stroke-width="13"/>
<path d="M1318,193 L1553,307 L1925,247" stroke="#14874a" stroke-width="12"/>
<!-- thin lines -->
<path d="M292,392 L537,194" stroke="#e03030" stroke-width="1"/>
<path d="M292,405 L553,194" stroke="#fff" stroke-width="1.2"/>
<path d="M444,283 L540,337 M446,280 L542,334" stroke="#fff" stroke-width="1"/>
<path d="M1135,190 L806,732" stroke="#fff" stroke-width="1"/>
<path d="M1207,194 L1100,370 M1210,194 L1103,370" stroke="#fff" stroke-width="1"/>
<path d="M1561,196 L1919,409 M1556,199 L1919,414" stroke="#fff" stroke-width="1"/>
<path d="M1673,265 L1393,727 M1676,265 L1396,727" stroke="#fff" stroke-width="1"/>
<path d="M1684,196 L1790,278 L1893.5,196" stroke="#3c5566" stroke-width="1"/>
<path d="M1868,196 L1863,370 L1919,357" stroke="#fff" stroke-width="1"/>

<path d="M1074,619 L1256,727 M1103,609 L1115,660 L1227.5,727" stroke="#fff" stroke-width="1"/>
<!-- crosshair -->
<path d="M485.5,196 V272 M417,203.5 H555" stroke="#fff" stroke-width="1"/>
<rect x="481" y="199" width="9" height="9" stroke="#fff" stroke-width="1"/>
<path d="M509.6,206 L512.7,215.5 L522.6,215.5 L514.6,221.4 L517.6,230.9 L509.6,225 L501.6,230.9 L504.6,221.4 L496.6,215.5 L506.5,215.5 Z" stroke="#2bb52b" stroke-width="1.2"/>
<circle cx="438" cy="274" r="5" stroke="#fff" stroke-width="1"/>
<circle cx="1676" cy="257" r="5" stroke="#fff" stroke-width="1"/>
<!-- UCS -->
<path d="M319.6,703.4 V658.2 M324.6,703.4 H364.3" stroke="#fff" stroke-width="1.2"/>
<path d="M319.2,645.5 L314.2,658.2 L324.6,658.2 Z M378.1,703.9 L364.3,698.5 L364.3,708.3 Z" stroke="#fff" stroke-width="1.2"/>
<rect x="314.2" y="698" width="10.4" height="10.3" stroke="#fff" stroke-width="1.2"/>
</g>
<g fill="#fff">
<circle cx="307" cy="393" r="3"/><circle cx="444.5" cy="283" r="3"/>
<circle cx="1813" cy="346" r="3"/><circle cx="1593.5" cy="396" r="2.5"/>
<circle cx="1515" cy="526.5" r="2.5"/><circle cx="1435" cy="657" r="2.5"/>
<circle cx="1256" cy="725" r="2.5"/><circle cx="1074" cy="619" r="2.5" fill="#bbb"/>
</g>
<path d="M682.4,268 L681.6,272 M680.5,277.5 L674.5,298" stroke="#fff" stroke-width="5" stroke-linecap="round"/>
<path d="M922,196 L920,201 M935,196 L933,201" stroke="#fff" stroke-width="5" stroke-linecap="round"/>
<path d="M351.6,449.2 L345.5,470.4 M351.6,449.2 L337.3,463.2 H350.8 M356.3,469.5 L375.6,449.2 M392.6,449.2 L387.5,469.9 M392.6,449.2 L378.5,463.2 H392.8 M1217.7,627.3 L1212.5,647.9 M1217.7,627.3 L1204.4,640.4 H1217.7 M1223.3,647.3 L1241.9,627.1 M1259.8,627.5 H1255.2 L1246.5,634.4 V637.5 H1257 L1258.6,640 V644.8 L1255,647.5 H1246.3 L1244.4,645.6 V642 L1245.6,637.5 M1447.5,195.9 L1446.7,198 L1443.3,200.7 M1439.2,201.5 H1442.7 L1445.4,204.5 L1444.6,207.6 L1440.4,211.5 H1432.1 L1430.2,208.2 M1454.2,195.9 L1454.6,198 L1456.7,201.3 H1466.3 M1468.3,195.9 L1467.5,197.2 L1466.7,204.3 L1465.4,205.3 L1457.9,211.5 H1452.9 M1478.3,195.9 L1475,211 M1471.3,211.5 H1481.7 L1485.8,208 L1486.7,203.4 L1485,201.1 L1488.75,196.3 M1476.7,201.3 H1485 M315.2,624.3 L319.6,629.2 L323.1,624.3 M319.6,629.2 V633.7 M390.4,699 L397.7,708.8 M397.7,699 L390.4,708.8" stroke="#fff" stroke-width="1.3" fill="none"/>





<g fill="none" stroke="#fff" stroke-width="5.5" stroke-linecap="round" stroke-linejoin="round"><path transform="translate(965,270) rotate(-45) scale(1.15)" d="M-6,-6 L-3,-10 H2 L5,-7 V-3 L1,0 L5,3 V7 L2,10 H-3 L-6,7"/><path transform="translate(978,254) rotate(-42) scale(1.15)" d="M-3,-8 L0,-11 V11 M-5,11 H5"/></g>
<g fill="none" stroke="#d6d6d6" stroke-width="5.5" stroke-linecap="round" stroke-linejoin="round"><path transform="translate(622,632) rotate(-45) scale(1.15)" d="M-6,-6 L-3,-10 H2 L5,-7 V-3 L1,0 L5,3 V7 L2,10 H-3 L-6,7"/><path transform="translate(637,616) rotate(-45) scale(1.1)" d="M-3,-11 H3 L6,-8 V8 L3,11 H-3 L-6,8 V-8 Z"/></g>
<!-- overlays -->

<rect x="1850" y="202" width="63" height="17" fill="#3a3a3a"/>
<path d="M1857,213 H1864 M1876,208 h7 v7 h-7 z M1895,206 l9,9 M1904,206 l-9,9" stroke="#888" stroke-width="1.5" fill="none"/>
<rect x="1820" y="269" width="40" height="38" fill="#6b6b6b"/>
<rect x="1826" y="275" width="28" height="26" fill="#5d5d5d"/>
<text x="1829" y="293" font-family="Liberation Sans" font-size="12" fill="#2a2a2a">TOP</text>
<rect x="1824" y="334" width="30" height="19" rx="4" fill="#5a5a5a"/>
<text x="1826" y="348" font-family="Liberation Sans" font-size="12" fill="#2a2a2a">WCS</text>
</svg></div>
<div id="layout" class="a">
<div class="a" style="left:0;top:0;width:1623px;height:1px;background:#d8d8d8"></div>
<div class="nb" style="left:2px"><svg width="22" height="20"><path d="M7,5 V15" stroke="#111" stroke-width="1.6"/><path d="M16,5 L9,10 L16,15 Z" fill="#111"/></svg></div>
<div class="nb" style="left:24px"><svg width="22" height="20"><path d="M14,5 L7,10 L14,15 Z" fill="#111"/></svg></div>
<div class="nb" style="left:46px"><svg width="22" height="20"><path d="M8,5 L15,10 L8,15 Z" fill="#111"/></svg></div>
<div class="nb" style="left:68px"><svg width="22" height="20"><path d="M6,5 L13,10 L6,15 Z" fill="#111"/><path d="M15,5 V15" stroke="#111" stroke-width="1.6"/></svg></div>
<div class="nb" style="left:90px"><svg width="22" height="20"><path d="M11,4 V16 M5,10 H17" stroke="#111" stroke-width="2"/></svg></div>
<svg class="a" style="left:112px;top:0" width="160" height="23"><path d="M4,1.5 L11.5,21 M66,21 L74,2 M71,9 L75.5,21 M139,21 L146,1.5" stroke="#111" stroke-width="1.1" fill="none"/></svg>
<div class="a" style="left:129px;top:3px;font-size:14px;font-weight:bold;color:#111">Model</div>
<div class="a" style="left:195px;top:3px;font-size:13.5px;color:#222">Arkusz1</div>
<svg class="a" style="left:1604px;top:6px" width="14" height="10"><path d="M1,1 H13 L7,9 Z" fill="#111"/></svg>
</div>
<div class="a" style="left:291px;top:196px;width:5px;height:553px;background:#7a7a7a"></div>
<div class="a" style="left:0;top:749px;width:1919px;height:7px;background:linear-gradient(#7c7c7c,#656565 25%,#6a6a6a 70%,#e4e4e4 72%)"></div>
<div id="cmd" class="a">
<div class="a" style="left:0;top:0;width:28px;height:227px;background:#a8a8a8"></div>
<svg class="a" style="left:4px;top:4px" width="13" height="12"><path d="M1.5,1 L11.5,11 M11.5,1 L1.5,11" stroke="#111" stroke-width="1.8"/></svg>
<svg class="a" style="left:4px;top:27px" width="13" height="8"><path d="M0,0 H13 L6.5,7 Z" fill="#111"/></svg>
<div class="a" style="left:27px;top:0px;width:1892px;height:227px;background:#fff;border-left:1px solid #ececec;box-shadow:inset 1.5px 0 0 #707070"></div>
<div class="a" style="left:1899px;top:0px;width:20px;height:202px;background:#f4f4f4"></div>
<div class="a" style="left:1905px;top:131px;width:3px;height:48px;background:#8a8a8a;border-radius:2px"></div>
<div class="a" style="left:29px;top:201px;width:1890px;height:1px;background:#a0a0a0"></div>
<div class="cl" style="top:3px">Polecenie: _APPLOAD</div>
<div class="cl" style="top:23px">Wczytywanie C:\Users\mario\Documents\LISP\ImportPunkty.lsp</div>
<div class="cl" style="top:43px">Polecenie: (LOAD "C:/Users/mario/Documents/LISP/ImportPunkty.lsp")</div>
<div class="cl" style="top:63px">Polecenie: IMPORTPUNKTY</div>
<div class="cl" style="top:83px">>>> Import zakonczony. Gemini &amp; ActCAD Polska pozdrawiaja!</div>
<div class="cl" style="top:103px">Polecenie: _NEW</div>
<div class="cl" style="top:123px">Polecenie: IMPORTPUNKTY</div>
<div class="cl" style="top:143px">Polecenie:</div>
<div class="cl" style="top:163px">Anuluj</div>
<div class="cl" style="top:183px">Polecenie: _EXIT</div>
<div class="cl" style="top:205px;left:31px">Polecenie: IMPORTPUNKTY</div>
</div>
<div id="status" class="a"><svg class="a" style="left:0;top:0" width="1919" height="35"><defs><linearGradient id="stg" x1="0" y1="0" x2="0" y2="1"><stop offset="0" stop-color="#3c3f45"/><stop offset="0.2" stop-color="#383b40"/><stop offset="0.28" stop-color="#2e3034"/><stop offset="1" stop-color="#2b2d31"/></linearGradient></defs><rect x="0" y="0" width="1919" height="35" fill="url(#stg)"/><rect x="736" y="4" width="1" height="31" fill="#4a4d52"/><rect x="746" y="4" width="1" height="31" fill="#4a4d52"/><rect x="1027" y="4" width="1" height="31" fill="#4a4d52"/><rect x="1063" y="4" width="1" height="31" fill="#4a4d52"/><rect x="1099" y="4" width="1" height="31" fill="#4a4d52"/><rect x="1195" y="4" width="1" height="31" fill="#4a4d52"/><rect x="1231" y="4" width="1" height="31" fill="#4a4d52"/><rect x="1267" y="4" width="1" height="31" fill="#4a4d52"/><rect x="1303" y="4" width="1" height="31" fill="#4a4d52"/><rect x="1339" y="4" width="1" height="31" fill="#4a4d52"/><rect x="1375" y="4" width="1" height="31" fill="#4a4d52"/><rect x="1412" y="4" width="1" height="31" fill="#4a4d52"/><rect x="1448" y="4" width="1" height="31" fill="#4a4d52"/><rect x="1482" y="4" width="1" height="31" fill="#4a4d52"/><rect x="1518" y="4" width="1" height="31" fill="#4a4d52"/><rect x="1573" y="4" width="1" height="31" fill="#4a4d52"/><rect x="1624" y="4" width="1" height="31" fill="#4a4d52"/><rect x="1660" y="4" width="1" height="31" fill="#4a4d52"/><rect x="1696" y="4" width="1" height="31" fill="#4a4d52"/><rect x="1732" y="4" width="1" height="31" fill="#4a4d52"/><rect x="1768" y="4" width="1" height="31" fill="#4a4d52"/><rect x="1806" y="4" width="1" height="31" fill="#4a4d52"/><rect x="1840" y="4" width="1" height="31" fill="#4a4d52"/><rect x="1877" y="4" width="1" height="31" fill="#4a4d52"/><rect x="1163" y="5" width="28" height="28" fill="#8a8a8a" stroke="#a8a8a8"/><rect x="1307" y="5" width="28" height="28" fill="#8a8a8a" stroke="#a8a8a8"/><rect x="1415" y="5" width="27" height="28" fill="#8a8a8a" stroke="#a8a8a8"/><rect x="1487" y="5" width="28" height="28" fill="#8a8a8a" stroke="#a8a8a8"/><g transform="translate(763,18)"><path d="M-9,4 h14 M-2,-3 v15" stroke="#e02a2a" stroke-width="3"/><path d="M0,-2 l10,-9" stroke="#3a7ac8" stroke-width="2.5"/><path d="M12,-13 l-7,1 l5,5 z" fill="#3a7ac8"/></g><g transform="translate(1046,18)"><path d="M-10,10 L10,-10 V10 Z" fill="#f4f4f4"/><path d="M-10,1 H8 M-2,-10 V10" stroke="#e03030" stroke-width="1.5"/><path d="M-2,-10 V10" stroke="#3aa050" stroke-width="1"/><circle cx="-2" cy="1" r="2.5" fill="none" stroke="#e03030"/></g><g transform="translate(1082,18)"><path d="M-11,2 H11" stroke="#d03030" stroke-width="2"/><path d="M0,-10 V12" stroke="#3a8a5a" stroke-width="1.5"/><circle cx="0" cy="2" r="2.5" fill="#d04040"/></g><g transform="translate(1118,18)"><path d="M0,-10 L3,1 L10,8 L0,4 L-10,8 L-3,1 Z" fill="#e8e8e8"/></g><text x="1137" y="24" font-family="Liberation Sans" font-size="14" fill="#e8e8e8">1:1</text><g transform="translate(1177,18)"><path d="M0,-10 L3,1 L10,8 L0,4 L-10,8 L-3,1 Z" fill="#e8e8e8"/><circle cx="5" cy="4" r="5" fill="#f0e050"/><rect x="3" y="8" width="4" height="3" fill="#555"/></g><g transform="translate(1213,18)"><path d="M0,-10 L3,1 L10,8 L0,4 L-10,8 L-3,1 Z" fill="#e8e8e8"/><path d="M4,-2 l6,-6" stroke="#888" stroke-width="3"/></g><g transform="translate(1249,18)"><rect x="-8" y="-8" width="2.5" height="2.5" fill="#f0f0f0"/><rect x="-8" y="-2" width="2.5" height="2.5" fill="#f0f0f0"/><rect x="-8" y="4" width="2.5" height="2.5" fill="#f0f0f0"/><rect x="-2" y="-8" width="2.5" height="2.5" fill="#f0f0f0"/><rect x="-2" y="-2" width="2.5" height="2.5" fill="#f0f0f0"/><rect x="-2" y="4" width="2.5" height="2.5" fill="#f0f0f0"/><rect x="4" y="-8" width="2.5" height="2.5" fill="#f0f0f0"/><rect x="4" y="-2" width="2.5" height="2.5" fill="#f0f0f0"/><rect x="4" y="4" width="2.5" height="2.5" fill="#f0f0f0"/><rect x="-9" y="3" width="4" height="4" fill="#e03050"/></g><g transform="translate(1284,18)"><path d="M-10,-4 H10 M-10,0 H10 M-10,4 H10 M-4,-10 V10 M0,-10 V10 M4,-10 V10" stroke="#f0f0f0" stroke-width="1.6"/></g><g transform="translate(1321,18)"><path d="M-9,-6 h7 M-5.5,-10 v7" stroke="#111" stroke-width="1.3"/><rect x="-4" y="1" width="13" height="5" fill="#111"/></g><g transform="translate(1357,18)"><path d="M-8,-10 V8" stroke="#3aa050" stroke-width="2"/><path d="M-8,9 H10" stroke="#c04040" stroke-width="2.5"/><path d="M-8,0 H-1 V6" stroke="#e8e8e8" stroke-width="1.5" fill="none"/></g><g transform="translate(1393,18)"><path d="M7,-5 A9,9 0 1 1 -2,-9" stroke="#d8d8d8" stroke-width="2" fill="none"/><path d="M0,1 l7,-7" stroke="#e03030" stroke-width="2"/><path d="M1,2 h8 l-3,-6 z" fill="#e03030"/></g><g transform="translate(1429,18)"><rect x="-9" y="-9" width="18" height="18" fill="none" stroke="#333" stroke-width="1.3"/><rect x="-11" y="-11" width="5" height="5" fill="none" stroke="#e03030" stroke-width="1.3"/></g><g transform="translate(1465,18)"><path d="M-9,9 L9,-9 M-9,9 H6" stroke="#e8e8e8" stroke-width="1.8"/><path d="M-2,0 a8,8 0 0 1 3,8" stroke="#e8e8e8" fill="none"/></g><g transform="translate(1501,18)"><rect x="-10" y="-10" width="20" height="5" fill="#222"/><rect x="-10" y="-2" width="20" height="5" fill="#222"/><rect x="-10" y="6" width="20" height="4" fill="#222"/><rect x="-10" y="-8" width="8" height="2" fill="#ddd"/><rect x="-10" y="0" width="10" height="2" fill="#ddd"/></g><text x="1522" y="24" font-family="Liberation Sans" font-size="13.5" fill="#f0f0f0">MODEL</text><text x="1576" y="24" font-family="Liberation Sans" font-size="13" fill="#8a8a8a">TABLET</text><g transform="translate(1643,18)"><circle r="8" fill="#1a5ac8"/><path d="M0,-12 V12 M-12,0 H12 M-8.5,-8.5 L8.5,8.5 M8.5,-8.5 L-8.5,8.5" stroke="#1a5ac8" stroke-width="4"/><circle r="3" fill="#2a2c30"/></g><g transform="translate(1679,18)"><rect x="-9" y="-9" width="17" height="19" fill="#f4f4f4"/><circle cx="-5" cy="-1" r="1.5" fill="#555"/><circle cx="-5" cy="5" r="1.5" fill="#555"/><path d="M-2,-1 h6 M-2,5 h6" stroke="#555" stroke-width="1.3"/><path d="M2,-2 l8,-9" stroke="#f0a030" stroke-width="3"/></g><g transform="translate(1714,18)"><rect x="-11" y="-10" width="8" height="9" fill="#f4f4f4"/><circle cx="5" cy="-5" r="5" fill="#f4f4f4"/><path d="M-11,11 L0,-2 L11,11 Z" fill="#f4f4f4"/></g><g transform="translate(1750,18)"><circle cx="0" cy="-6" r="4.5" fill="none" stroke="#ddd" stroke-width="2.5"/><path d="M-4,-1 L-6,11 L0,6 L6,11 L4,-1" fill="#ddd"/></g><g transform="translate(1786,18)"><rect x="-11" y="-10" width="22" height="15" fill="#f0f0f0" stroke="#3a7ac8" stroke-width="2"/><rect x="-5" y="6" width="10" height="3" fill="#3a7ac8"/><path d="M-6,1 l4,-4 M2,-3 l5,-5 M7,-8 h-3 M7,-8 v3 M-6,1 h3 M-6,1 v-3" stroke="#3a7ac8" stroke-width="1.5"/></g><g transform="translate(1822,18)"><rect x="-12" y="-12" width="14" height="11" fill="#f0f0f0" stroke="#3a7ac8" stroke-width="1"/><rect x="-12" y="-12" width="14" height="3" fill="#3a7ac8"/><rect x="-4" y="-1" width="15" height="12" fill="#f0f0f0" stroke="#3a7ac8"/><rect x="-4" y="-1" width="15" height="3" fill="#3a7ac8"/></g><g transform="translate(1858,18)"><circle r="10" fill="#f0f0f0"/><rect x="-1.5" y="-7" width="3" height="12" fill="#2a6ac8"/><circle cy="-9" r="0" fill="#2a6ac8"/></g><g transform="translate(1894,18)"><circle r="10" fill="#3ab04a" stroke="#a040c0" stroke-width="1.2"/><path d="M-6,0 l4,4 l8,-8" stroke="#fff" stroke-width="3" fill="none"/></g><text x="784" y="24" font-family="Liberation Sans" font-size="14" fill="#e8e8e8">7509747.6909,5772231.5936,0.0000</text></svg></div>
<div id="dlg" class="a" style="left:530px;top:325px;width:840px;height:284px;background:#f0f0f0;border-radius:8px;overflow:hidden;box-shadow:0 0 0 1px #5a57b8">
<div class="a" style="left:0;top:0;width:840px;height:38px;background:#6c69d4"></div>
<div class="a" style="left:10px;top:11px;font-size:15px;color:#f4f4fb;white-space:nowrap">Import Punktow GEO</div>
<svg class="a" style="left:812px;top:12px" width="14" height="14"><path d="M1,1 L13,13 M13,1 L1,13" stroke="#f4f4fb" stroke-width="1.4"/></svg>
<!-- group boxes -->
<div class="a" style="left:9px;top:50px;width:361px;height:154px;border:1px solid #dcdcdc;border-radius:2px"></div>
<div class="a" style="left:15px;top:42px;padding:0 3px;background:#f0f0f0;font-size:13px;color:#1a1a1a;white-space:nowrap">Format danych</div>
<div class="a" style="left:380px;top:50px;width:223px;height:154px;border:1px solid #dcdcdc;border-radius:2px"></div>
<div class="a" style="left:385px;top:42px;padding:0 3px;background:#f0f0f0;font-size:13px;color:#1a1a1a;white-space:nowrap">Opcje rysowania</div>
<div class="a" style="left:610px;top:50px;width:223px;height:154px;border:1px solid #dcdcdc;border-radius:2px"></div>
<div class="a" style="left:615px;top:42px;padding:0 3px;background:#f0f0f0;font-size:13px;color:#1a1a1a;white-space:nowrap">Zakres i Przenumerowanie</div>
<!-- labels -->
<div class="lb" style="top:70px;left:387px">Numery punktow</div>
<div class="lb" style="top:98px;left:387px">Wysokosci</div>
<div class="lb" style="top:126px;left:387px">Opisy</div>
<div class="lb" style="top:154px;left:387px">Styl punktu (PDMODE)</div>
<div class="lb" style="top:182px;left:387px">Odleglosc tekstow</div>
<div class="lb" style="top:70px;left:617px">Dodaj przed numerem</div>
<div class="lb" style="top:126px;left:617px">Od numeru</div>
<div class="lb" style="top:182px;left:617px">Do numeru</div>
<div class="in" style="left:494px;top:66px;width:102px">1</div>
<div class="in" style="left:462px;top:94px;width:134px">1</div>
<div class="in" style="left:430px;top:122px;width:166px">1</div>
<div class="in" style="left:529px;top:150px;width:67px">35</div>
<div class="in" style="left:505px;top:178px;width:91px">0.5</div>
<div class="in" style="left:758px;top:66px;width:67px"></div>
<div class="in" style="left:690px;top:122px;width:135px">1</div>
<div class="in" style="left:690px;top:178px;width:135px">999999</div>
<div class="lb" style="top:222px;right:256px">Program powstal we wspolpracy z Gemini&nbsp; ActCAD Polska</div>
<div class="a btn" style="left:329px;top:256px;width:63px;height:24px;border:1px solid #2a6fb8;box-shadow:inset 0 0 0 0.5px #2a6fb8">OK</div>
<div class="a btn" style="left:430px;top:256px;width:75px;height:24px">Cancel</div>
<!-- combo -->
<div class="a" style="left:16px;top:66px;width:350px;height:23px;border:1px solid #2a6db5;background:linear-gradient(#e6f2fd,#d3e8fb)"></div>
<div class="a" style="left:21px;top:70px;font-size:13px;color:#111;white-space:nowrap">1. Pt# North(Y) East(X) Elev Desc</div>
<svg class="a" style="left:349px;top:74px" width="11" height="7"><path d="M1,1 L5.5,5.5 L10,1" stroke="#333" fill="none" stroke-width="1.1"/></svg>
<div class="a" style="left:16px;top:89px;width:350px;height:164px;border:1px solid #2a6db5;background:#fff;box-shadow:1px 2px 3px rgba(0,0,0,.25)">
<div class="li" style="top:1px">1. Pt# North(Y) East(X) Elev Desc</div>
<div class="li" style="top:17px;background:#0078d7;color:#fff">2. Pt# North East Elev</div>
<div class="li" style="top:33px">3. Pt# North East</div>
<div class="li" style="top:49px">4. Pt# East(X) North(Y) Elev Desc</div>
<div class="li" style="top:65px">5. Pt# East North Elev</div>
<div class="li" style="top:81px">6. Pt# East North</div>
<div class="li" style="top:97px">7. East North Elev Desc</div>
<div class="li" style="top:113px">8. North East Elev Desc</div>
<div class="li" style="top:129px">9. North East Desc</div>
<div class="li" style="top:145px">10. CSV: Pt#,East,North,Elev,Desc</div>
</div>
<svg class="a" style="left:270px;top:110px" width="14" height="22"><path d="M1,1 L1,17 L4.5,13.5 L7,19.5 L9.5,18.5 L7,12.5 L12,12.5 Z" fill="#fff" stroke="#000" stroke-width="1"/></svg>
</div>
</body></html>
